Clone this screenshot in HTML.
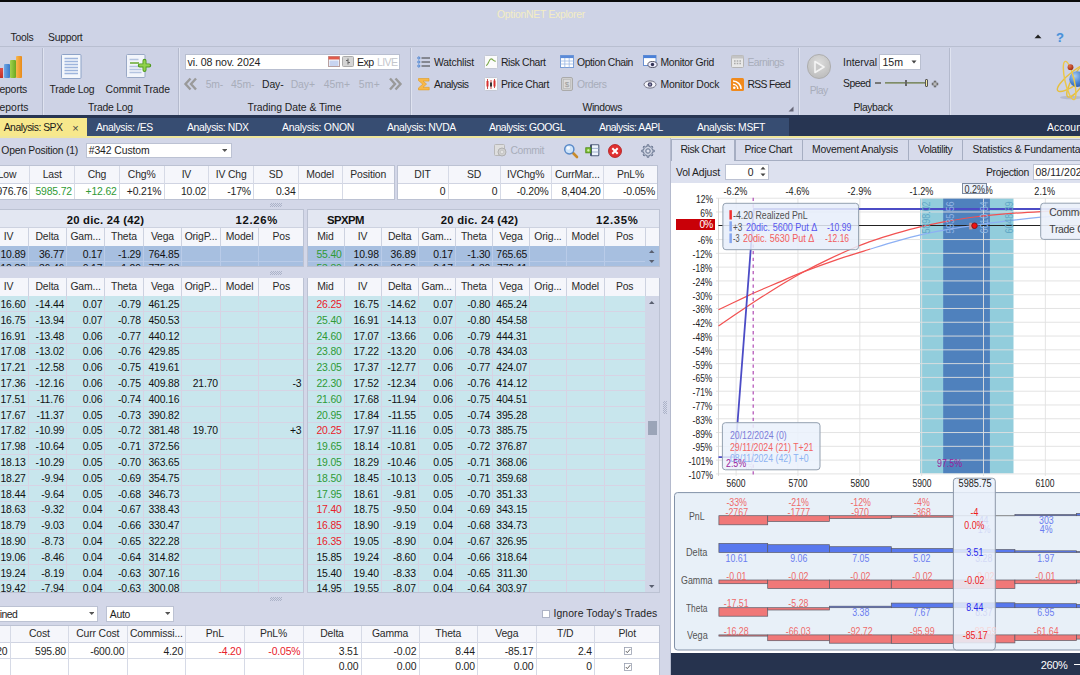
<!DOCTYPE html>
<html lang="es"><head><meta charset="utf-8"><title>OptionNET Explorer</title>
<style>
html,body{margin:0;padding:0}
body{width:1080px;height:675px;overflow:hidden;position:relative;background:#d3d7e8;font-family:"Liberation Sans",sans-serif;font-size:10.4px;letter-spacing:-0.15px;color:#1e1e1e}
.b{position:absolute;display:block;overflow:hidden}
.t{position:absolute;white-space:nowrap;line-height:14px;height:14px}
svg text{font-family:"Liberation Sans",sans-serif}
</style></head>
<body>
<div class="b" style="left:0px;top:0px;width:1080px;height:116px;background:#ced3e6;"></div>
<div class="b" style="left:0px;top:0px;width:1080px;height:1.5px;background:#0a0a0a;"></div>
<span class="t" style="left:497px;top:7.6px;letter-spacing:-0.27px;color:#f3edc4;">OptionNET Explorer</span>
<span class="t" style="left:10.5px;top:31.1px;letter-spacing:-0.26px;">Tools</span>
<span class="t" style="left:48px;top:31.1px;letter-spacing:-0.28px;">Support</span>
<svg class="b" style="left:1033px;top:32px" width="10" height="8" viewBox="0 0 10 8"><path d="M1.5 6.2 L5 2.4 L8.5 6.2Z" fill="#222"/></svg>
<span class="t" style="left:1056.1px;top:30.6px;font-size:13px;color:#4a90d8;font-weight:bold;text-shadow:0 0 1px #9cc8f0;">?</span>
<div class="b" style="left:0px;top:46px;width:1080px;height:1px;background:#b9bfd1;"></div>
<div class="b" style="left:0px;top:47px;width:1080px;height:68px;background:#cdd2e5;"></div>
<div class="b" style="left:42px;top:48px;width:1px;height:66.5px;background:#b4bacd;"></div>
<div class="b" style="left:43px;top:48px;width:1px;height:66.5px;background:#dfe3f0;"></div>
<div class="b" style="left:177.8px;top:48px;width:1px;height:66.5px;background:#b4bacd;"></div>
<div class="b" style="left:178.8px;top:48px;width:1px;height:66.5px;background:#dfe3f0;"></div>
<div class="b" style="left:410px;top:48px;width:1px;height:66.5px;background:#b4bacd;"></div>
<div class="b" style="left:411px;top:48px;width:1px;height:66.5px;background:#dfe3f0;"></div>
<div class="b" style="left:798.2px;top:48px;width:1px;height:66.5px;background:#b4bacd;"></div>
<div class="b" style="left:799.2px;top:48px;width:1px;height:66.5px;background:#dfe3f0;"></div>
<div class="b" style="left:948.8px;top:48px;width:1px;height:66.5px;background:#b4bacd;"></div>
<div class="b" style="left:949.8px;top:48px;width:1px;height:66.5px;background:#dfe3f0;"></div>
<div class="b" style="left:0px;top:67.5px;width:2.5px;height:10px;background:linear-gradient(#e0524a,#c03028);"></div>
<div class="b" style="left:3.5px;top:63.5px;width:6px;height:14px;background:linear-gradient(90deg,#6fa8e6,#3a78c8);border-radius:1px;"></div>
<div class="b" style="left:10px;top:60px;width:5.5px;height:17.5px;background:linear-gradient(90deg,#a4d24e,#6aa820);border-radius:1px;"></div>
<div class="b" style="left:16px;top:55.5px;width:6px;height:22px;background:linear-gradient(90deg,#f8b850,#e88a18);border-radius:1px;"></div>
<span class="t" style="left:-0.5px;top:83.1px;letter-spacing:-0.23px;">eports</span>
<span class="t" style="left:-0.5px;top:101.1px;letter-spacing:0.02px;">eports</span>
<svg class="b" style="left:60px;top:53px" width="23" height="27" viewBox="0 0 23 27"><rect x="1.5" y="1.5" width="19.5" height="24" rx="1" fill="#f4f7fc" stroke="#8ea3c8" stroke-width="1"/><g stroke="#9db4dc" stroke-width="1.5"><path d="M4.5 5.5h13.5M4.5 8.5h13.5M4.5 11.5h13.5M4.5 14.5h13.5M4.5 17.5h13.5M4.5 20.5h13.5"/></g></svg>
<span class="t" style="left:49.5px;top:83.1px;letter-spacing:-0.23px;">Trade Log</span>
<span class="t" style="left:88px;top:101.1px;letter-spacing:-0.23px;">Trade Log</span>
<svg class="b" style="left:125px;top:53px" width="27" height="27" viewBox="0 0 27 27"><rect x="1.5" y="1.5" width="18.5" height="23" rx="1" fill="#f2f5fb" stroke="#9aa9c6" stroke-width="1"/><g stroke="#b4c4e0" stroke-width="1.4"><path d="M4.5 6.5h9M4.5 13.5h12M4.5 16.5h12M4.5 19.5h12"/></g><path d="M5 10h9" stroke="#6fae3c" stroke-width="1.6"/><path d="M19.5 7.7v9.4M14.8 12.4h9.4" stroke="#4f9a1e" stroke-width="4" stroke-linecap="round"/><path d="M19.5 8v8.8M15.1 12.4h8.8" stroke="#92d24c" stroke-width="2.2" stroke-linecap="round"/></svg>
<span class="t" style="left:105.5px;top:83.1px;letter-spacing:-0.07px;">Commit Trade</span>
<div class="b" style="left:185px;top:54px;width:214.5px;height:15.5px;background:#fff;border:1px solid #b9bfd0;box-sizing:border-box;"></div>
<span class="t" style="left:187.5px;top:54.7px;font-size:10.6px;letter-spacing:-0.07px;">vi. 08 nov. 2024</span>
<svg class="b" style="left:328px;top:55.6px" width="12" height="11" viewBox="0 0 12 11"><rect x="0.5" y="0.5" width="11" height="10" fill="#fff" stroke="#b8a0a0" stroke-width="1"/><rect x="0.5" y="0.5" width="11" height="3" fill="#e05a4a"/><rect x="1.5" y="4.5" width="9" height="5.5" fill="#c8d4f0"/></svg>
<svg class="b" style="left:342px;top:56px" width="12" height="11" viewBox="0 0 12 11"><rect x="0.5" y="0.5" width="11" height="10" rx="1" fill="#d4d4d4" stroke="#aaa" stroke-width="1"/><path d="M6 2.5v6M4 4.5h2M6 6.5h2" stroke="#666" stroke-width="1" fill="none"/></svg>
<span class="t" style="left:357px;top:54.7px;font-size:10.6px;letter-spacing:-0.59px;">Exp</span>
<span class="t" style="left:377px;top:54.7px;font-size:10.6px;letter-spacing:-0.62px;color:#c3c6cc;">LIVE</span>
<svg class="b" style="left:183px;top:76px" width="16" height="16" viewBox="0 0 16 16"><path d="M7.5 2.5L2.5 8l5 5.5M13 2.5L8 8l5 5.5" fill="none" stroke="#9a9a9a" stroke-width="2.4"/></svg>
<svg class="b" style="left:387px;top:76px" width="16" height="16" viewBox="0 0 16 16"><path d="M3 2.5L8 8l-5 5.5M8.5 2.5l5 5.5-5 5.5" fill="none" stroke="#9a9a9a" stroke-width="2.4"/></svg>
<span class="t" style="left:205.7px;top:77.6px;letter-spacing:-0.14px;color:#a8adba;">5m-</span>
<span class="t" style="left:231px;top:77.6px;letter-spacing:-0.05px;color:#a8adba;">45m-</span>
<span class="t" style="left:262px;top:77.6px;letter-spacing:-0.11px;">Day-</span>
<span class="t" style="left:290.7px;top:77.6px;letter-spacing:-0.07px;color:#a8adba;">Day+</span>
<span class="t" style="left:323.7px;top:77.6px;letter-spacing:0px;color:#a8adba;">45m+</span>
<span class="t" style="left:358.7px;top:77.6px;letter-spacing:0.26px;color:#a8adba;">5m+</span>
<span class="t" style="left:247.5px;top:101.1px;letter-spacing:-0.05px;">Trading Date &amp; Time</span>
<svg class="b" style="left:417px;top:56px" width="14" height="12" viewBox="0 0 14 12"><g fill="none" stroke="#3a7ad0" stroke-width="0.9"><circle cx="1.8" cy="2" r="1.1"/><circle cx="1.8" cy="6" r="1.1"/><circle cx="1.8" cy="10" r="1.1"/></g><path d="M4.5 2h8.5M4.5 6h8.5M4.5 10h8.5" stroke="#3c3c3c" stroke-width="1"/></svg>
<span class="t" style="left:434px;top:55.6px;letter-spacing:-0.2px;">Watchlist</span>
<svg class="b" style="left:417px;top:77px" width="14" height="14" viewBox="0 0 14 14"><path d="M1.5 1.5h10.5v2.6h-6l3.6 3-3.6 3.2h6.2v2.6H1.5v-2l4.3-3.7L1.5 3.6z" fill="#f8b848" stroke="#e09a20" stroke-width="0.6"/></svg>
<span class="t" style="left:434px;top:78.1px;letter-spacing:-0.53px;">Analysis</span>
<svg class="b" style="left:484px;top:55px" width="14" height="14" viewBox="0 0 14 14"><rect x="0.5" y="0.5" width="13" height="13" rx="1" fill="#fbfbfb" stroke="#c4c8d4"/><path d="M2 10.5c2.4 0 2.8-6.6 5-6.6s2.2 2.4 4.8 2.4" fill="none" stroke="#7aa84a" stroke-width="1.1"/></svg>
<span class="t" style="left:501px;top:55.6px;letter-spacing:-0.4px;">Risk Chart</span>
<svg class="b" style="left:484px;top:77px" width="14" height="14" viewBox="0 0 14 14"><rect x="0.5" y="0.5" width="13" height="13" rx="1" fill="#fbfbfb" stroke="#c4c8d4"/><path d="M3.5 2v10M7 3v9M10.5 2v9" stroke="#c02020" stroke-width="0.8"/><rect x="2.5" y="4" width="2" height="5.5" fill="#d83030"/><rect x="6" y="5.5" width="2" height="4" fill="#333"/><rect x="9.5" y="3.5" width="2" height="6" fill="#d83030"/></svg>
<span class="t" style="left:501px;top:78.1px;letter-spacing:-0.37px;">Price Chart</span>
<svg class="b" style="left:560px;top:55px" width="14" height="13" viewBox="0 0 14 13"><rect x="0.5" y="0.5" width="13" height="12" fill="#fff" stroke="#7a9ed6"/><rect x="0.5" y="0.5" width="13" height="2.6" fill="#5b8ad8"/><path d="M0.5 6h13M0.5 9h13M4.8 3v9.5M9.2 3v9.5" stroke="#9ab8e4" stroke-width="0.8"/></svg>
<span class="t" style="left:577px;top:55.6px;letter-spacing:-0.39px;">Option Chain</span>
<svg class="b" style="left:561px;top:77px" width="12" height="14" viewBox="0 0 12 14"><rect x="0.5" y="0.5" width="11" height="13" rx="1.5" fill="#cfcfcf" stroke="#aaa"/><rect x="2.5" y="2.5" width="7" height="9" fill="#dcdcdc" stroke="#b4b4b4" stroke-width="0.6"/></svg>
<span class="t" style="left:564.85px;top:78.1px;font-size:8px;color:#999;">$</span>
<span class="t" style="left:577px;top:78.1px;letter-spacing:-0.38px;color:#a8adba;">Orders</span>
<svg class="b" style="left:643px;top:55px" width="15" height="14" viewBox="0 0 15 14"><rect x="0.5" y="0.5" width="12.5" height="10" fill="#fff" stroke="#6a90d0"/><rect x="0.5" y="0.5" width="12.5" height="2.6" fill="#4a80d8"/><ellipse cx="9.5" cy="9.5" rx="4.6" ry="3" fill="#eef" stroke="#445" stroke-width="0.9"/><circle cx="9.5" cy="9.5" r="1.7" fill="#335"/></svg>
<span class="t" style="left:660.5px;top:55.6px;letter-spacing:-0.31px;">Monitor Grid</span>
<svg class="b" style="left:643px;top:79px" width="15" height="11" viewBox="0 0 15 11"><ellipse cx="7" cy="5.5" rx="6" ry="3.6" fill="#f4f4fa" stroke="#667" stroke-width="0.9"/><circle cx="7" cy="5.5" r="2.3" fill="#446"/><circle cx="7" cy="5.5" r="0.9" fill="#aac"/></svg>
<span class="t" style="left:660.5px;top:78.1px;letter-spacing:-0.21px;">Monitor Dock</span>
<svg class="b" style="left:731px;top:55px" width="13" height="13" viewBox="0 0 13 13"><rect x="0.5" y="0.5" width="12" height="12" rx="1" fill="#e8e8e8" stroke="#b4b4b4"/><rect x="0.5" y="0.5" width="12" height="3" fill="#c4c4c4"/><path d="M3 6h1.6M5.7 6h1.6M8.4 6h1.6M3 8.5h1.6M5.7 8.5h1.6M8.4 8.5h1.6" stroke="#aaa" stroke-width="1.3"/></svg>
<span class="t" style="left:747.5px;top:55.6px;letter-spacing:-0.57px;color:#a8adba;">Earnings</span>
<svg class="b" style="left:731px;top:77.5px" width="13" height="13" viewBox="0 0 13 13"><rect x="0" y="0" width="13" height="13" rx="1.5" fill="#f08a1c"/><circle cx="3.3" cy="9.8" r="1.3" fill="#fff"/><path d="M2 6.3a4.8 4.8 0 0 1 4.8 4.8M2 3a8.1 8.1 0 0 1 8.1 8.1" fill="none" stroke="#fff" stroke-width="1.5"/></svg>
<span class="t" style="left:747.5px;top:78.1px;letter-spacing:-0.68px;">RSS Feed</span>
<span class="t" style="left:582.5px;top:101.1px;letter-spacing:-0.38px;">Windows</span>
<svg class="b" style="left:788px;top:106px" width="6" height="6" viewBox="0 0 6 6"><path d="M5.5 0.5v5h-5z" fill="#667"/></svg>
<div class="b" style="left:806.5px;top:54px;width:24.5px;height:24.5px;background:radial-gradient(circle at 50% 35%,#dcdcdc,#b6b6b6);border-radius:50%;border:1px solid #adadad;box-sizing:border-box;"></div>
<svg class="b" style="left:813px;top:59.5px" width="13" height="14" viewBox="0 0 13 14"><path d="M2 1.5L11 7 2 12.5z" fill="#c9c9c9" stroke="#f4f4f4" stroke-width="1.6" stroke-linejoin="round"/></svg>
<span class="t" style="left:809.7px;top:83.6px;letter-spacing:-0.56px;color:#a8adba;">Play</span>
<span class="t" style="left:843px;top:55.6px;letter-spacing:-0.01px;">Interval</span>
<div class="b" style="left:878.7px;top:53.7px;width:42.6px;height:16px;background:#fff;border:1px solid #b9bfd0;box-sizing:border-box;"></div>
<span class="t" style="left:882.5px;top:54.5px;font-size:10.6px;letter-spacing:-0.04px;">15m</span>
<svg class="b" style="left:911px;top:60px" width="6" height="4" viewBox="0 0 6 4"><path d="M0.5 0.5h5L3 3.5z" fill="#444"/></svg>
<span class="t" style="left:843px;top:77.1px;letter-spacing:-0.51px;">Speed</span>
<div class="b" style="left:874.5px;top:82.3px;width:6px;height:1.6px;background:#777;"></div>
<div class="b" style="left:884.5px;top:82px;width:43px;height:2px;background:linear-gradient(#6f7f5a,#a8b09a);"></div>
<div class="b" style="left:904.5px;top:80px;width:2px;height:6px;background:#e8e8e8;border:0.5px solid #666;box-sizing:border-box;"></div>
<div class="b" style="left:924.5px;top:79px;width:3px;height:7.5px;background:#f3e8a0;border:0.7px solid #555;box-sizing:border-box;border-radius:1px;"></div>
<svg class="b" style="left:931px;top:79.5px" width="8" height="8" viewBox="0 0 8 8"><path d="M4 0.8v6.4M0.8 4h6.4" stroke="#555" stroke-width="2.4"/><path d="M4 1.6v4.8M1.6 4h4.8" stroke="#e4e4e4" stroke-width="0.9"/></svg>
<span class="t" style="left:853.5px;top:101.1px;letter-spacing:-0.4px;">Playback</span>
<svg class="b" style="left:1052px;top:54px" width="28" height="50" viewBox="0 0 28 50"><defs><radialGradient id="gs" cx="35%" cy="30%" r="75%"><stop offset="0" stop-color="#a8cdf4"/><stop offset="0.6" stop-color="#4a84d0"/><stop offset="1" stop-color="#2a5cae"/></radialGradient><radialGradient id="gr" cx="35%" cy="30%" r="75%"><stop offset="0" stop-color="#e0704a"/><stop offset="1" stop-color="#a02c10"/></radialGradient></defs><ellipse cx="19" cy="43.5" rx="11" ry="1.8" fill="#8a90a8" opacity="0.35"/><g fill="none" stroke="#e6c040" stroke-width="1.45"><ellipse cx="27" cy="25" rx="6" ry="21" transform="rotate(32 27 25)"/><ellipse cx="24.5" cy="22.5" rx="23.5" ry="6.3" transform="rotate(-37 24.5 22.5)"/></g><circle cx="25.2" cy="25.2" r="7.9" fill="url(#gs)"/><ellipse cx="17.6" cy="26.5" rx="4.6" ry="19.6" transform="rotate(-13 17.6 26.5)" fill="none" stroke="#ecc848" stroke-width="1.45"/><path d="M20.5 18.5a8 8 0 0 1 9 -1" fill="none" stroke="#4a84d0" stroke-width="0"/><circle cx="18.5" cy="13.2" r="2.9" fill="url(#gr)"/></svg>
<div class="b" style="left:0px;top:115.3px;width:1080px;height:21px;background:#273552;"></div>
<div class="b" style="left:0px;top:117.7px;width:789px;height:18.4px;background:#374d72;"></div>
<div class="b" style="left:0px;top:118px;width:87px;height:18.2px;background:#f7e88c;"></div>
<span class="t" style="left:3.7px;top:120.9px;letter-spacing:-0.5px;color:#1a1a1a;">Analysis: SPX</span>
<span class="t" style="left:72.16px;top:120.6px;font-size:11px;color:#444;">×</span>
<span class="t" style="left:96px;top:120.9px;letter-spacing:-0.33px;color:#fff;">Analysis: /ES</span>
<span class="t" style="left:187px;top:120.9px;letter-spacing:-0.37px;color:#fff;">Analysis: NDX</span>
<span class="t" style="left:282px;top:120.9px;letter-spacing:-0.26px;color:#fff;">Analysis: ONON</span>
<span class="t" style="left:387px;top:120.9px;letter-spacing:-0.31px;color:#fff;">Analysis: NVDA</span>
<span class="t" style="left:489px;top:120.9px;letter-spacing:-0.44px;color:#fff;">Analysis: GOOGL</span>
<span class="t" style="left:599px;top:120.9px;letter-spacing:-0.47px;color:#fff;">Analysis: AAPL</span>
<span class="t" style="left:697px;top:120.9px;letter-spacing:-0.34px;color:#fff;">Analysis: MSFT</span>
<span class="t" style="left:1047px;top:120.9px;letter-spacing:0.06px;color:#fff;">Account</span>
<div class="b" style="left:0px;top:136px;width:1080px;height:1.5px;background:#f0e69a;"></div>
<div class="b" style="left:0px;top:138px;width:670px;height:537px;background:#d3d7e8;"></div>
<span class="t" style="left:1.3px;top:144.1px;letter-spacing:-0.25px;">Open Position (1)</span>
<div class="b" style="left:86px;top:143px;width:145.5px;height:15px;background:#fff;border:1px solid #bcc2d3;box-sizing:border-box;"></div>
<span class="t" style="left:88.7px;top:144.3px;letter-spacing:-0.08px;">#342 Custom</span>
<svg class="b" style="left:221.5px;top:149px" width="5.5" height="3" viewBox="0 0 5.5 3"><path d="M0 0H5.5L2.75 3z" fill="#555"/></svg>
<svg class="b" style="left:494px;top:144px" width="13" height="13" viewBox="0 0 13 13"><rect x="0.5" y="0.5" width="10" height="11" rx="1" fill="#dedede" stroke="#b8b8b8"/><circle cx="8" cy="8" r="4" fill="#d0d0d0" stroke="#b0b0b0"/><circle cx="8" cy="8" r="1.8" fill="#e4e4e4" stroke="#b8b8b8" stroke-width="0.6"/></svg>
<span class="t" style="left:510.4px;top:144.3px;letter-spacing:-0.37px;color:#a8adba;">Commit</span>
<svg class="b" style="left:563px;top:143px" width="16" height="16" viewBox="0 0 16 16"><path d="M9.5 9.5L14 14" stroke="#c88a2a" stroke-width="2.6" stroke-linecap="round"/><circle cx="6.3" cy="6.3" r="4.6" fill="#cfe4fa" stroke="#5a8ac8" stroke-width="1.5"/><circle cx="5.3" cy="5" r="1.8" fill="#fff" opacity="0.8"/></svg>
<svg class="b" style="left:585px;top:143.8px" width="15" height="13" viewBox="0 0 15 13"><rect x="5.6" y="0.8" width="8.2" height="11" rx="0.8" fill="#eef4fd" stroke="#51607e" stroke-width="1.1"/><path d="M5.6 4.4h8.2M5.6 8h8.2" stroke="#8fa2c4" stroke-width="0.8"/><path d="M6.2 0.8v11" stroke="#3c4a68" stroke-width="1.4"/><rect x="0.8" y="3.8" width="5" height="5" fill="#84c43a" stroke="#4c8a14" stroke-width="0.9"/><path d="M3.3 5v2.6M2 6.3h2.6" stroke="#e8f8d0" stroke-width="0.7"/></svg>
<svg class="b" style="left:607.5px;top:143.5px" width="14" height="14" viewBox="0 0 14 14"><circle cx="7" cy="7" r="6.5" fill="#e03030" stroke="#b01818" stroke-width="0.8"/><path d="M4.3 4.3l5.4 5.4M9.7 4.3l-5.4 5.4" stroke="#fff" stroke-width="2"/></svg>
<svg class="b" style="left:640.8px;top:143.6px" width="14" height="14" viewBox="0 0 14 14"><path d="M11.80 6.00L13.35 6.24L13.35 7.76L11.80 8.00L11.10 9.69L12.03 10.96L10.96 12.03L9.69 11.10L8.00 11.80L7.76 13.35L6.24 13.35L6.00 11.80L4.31 11.10L3.04 12.03L1.97 10.96L2.90 9.69L2.20 8.00L0.65 7.76L0.65 6.24L2.20 6.00L2.90 4.31L1.97 3.04L3.04 1.97L4.31 2.90L6.00 2.20L6.24 0.65L7.76 0.65L8.00 2.20L9.69 2.90L10.96 1.97L12.03 3.04L11.10 4.31Z" fill="#a4adc2" stroke="#6c7892" stroke-width="0.9" stroke-linejoin="round"/><circle cx="7" cy="7" r="3.5" fill="none" stroke="#dfe3ee" stroke-width="0.9"/><circle cx="7" cy="7" r="2.1" fill="#dde1ee" stroke="#6c7892" stroke-width="0.9"/></svg>
<div class="b" style="left:-2px;top:165px;width:396.5px;height:34.5px;background:#fff;border:1px solid #bcc2d3;box-sizing:border-box;"></div>
<div class="b" style="left:-1px;top:166px;width:394.5px;height:17.2px;background:#f5f6fb;"></div>
<div class="b" style="left:-1px;top:182.7px;width:394.5px;height:1px;background:#d0d4e2;"></div>
<div class="b" style="left:29.4px;top:166px;width:1px;height:32.5px;background:#d6dae6;"></div>
<div class="b" style="left:74.1px;top:166px;width:1px;height:32.5px;background:#d6dae6;"></div>
<div class="b" style="left:118.8px;top:166px;width:1px;height:32.5px;background:#d6dae6;"></div>
<div class="b" style="left:163.5px;top:166px;width:1px;height:32.5px;background:#d6dae6;"></div>
<div class="b" style="left:208.3px;top:166px;width:1px;height:32.5px;background:#d6dae6;"></div>
<div class="b" style="left:253px;top:166px;width:1px;height:32.5px;background:#d6dae6;"></div>
<div class="b" style="left:297.7px;top:166px;width:1px;height:32.5px;background:#d6dae6;"></div>
<div class="b" style="left:341.5px;top:166px;width:1px;height:32.5px;background:#d6dae6;"></div>
<span class="t" style="left:42.72px;top:167.6px;color:#2a2a2a;">Last</span>
<span class="t" style="left:87.64px;top:167.6px;color:#2a2a2a;">Chg</span>
<span class="t" style="left:127.79px;top:167.6px;color:#2a2a2a;">Chg%</span>
<span class="t" style="left:181.64px;top:167.6px;color:#2a2a2a;">IV</span>
<span class="t" style="left:215.7px;top:167.6px;color:#2a2a2a;">IV Chg</span>
<span class="t" style="left:268.78px;top:167.6px;color:#2a2a2a;">SD</span>
<span class="t" style="left:306.31px;top:167.6px;color:#2a2a2a;">Model</span>
<span class="t" style="left:350.35px;top:167.6px;color:#2a2a2a;">Position</span>
<span class="t" style="left:-2.33px;top:167.6px;color:#2a2a2a;">Low</span>
<span class="t" style="left:-3.61px;top:185.4px;">976.76</span>
<span class="t" style="left:35.46px;top:185.4px;color:#2f9a36;">5985.72</span>
<span class="t" style="left:85.5px;top:185.4px;color:#2f9a36;">+12.62</span>
<span class="t" style="left:126.74px;top:185.4px;">+0.21%</span>
<span class="t" style="left:180.92px;top:185.4px;">10.02</span>
<span class="t" style="left:227.22px;top:185.4px;">-17%</span>
<span class="t" style="left:275.96px;top:185.4px;">0.34</span>
<div class="b" style="left:397px;top:165px;width:260.7px;height:34.5px;background:#fff;border:1px solid #bcc2d3;box-sizing:border-box;"></div>
<div class="b" style="left:398px;top:166px;width:258.7px;height:17.2px;background:#f5f6fb;"></div>
<div class="b" style="left:398px;top:182.7px;width:258.7px;height:1px;background:#d0d4e2;"></div>
<div class="b" style="left:447.5px;top:166px;width:1px;height:32.5px;background:#d6dae6;"></div>
<div class="b" style="left:499.5px;top:166px;width:1px;height:32.5px;background:#d6dae6;"></div>
<div class="b" style="left:550.8px;top:166px;width:1px;height:32.5px;background:#d6dae6;"></div>
<div class="b" style="left:602.8px;top:166px;width:1px;height:32.5px;background:#d6dae6;"></div>
<span class="t" style="left:414.35px;top:167.6px;color:#2a2a2a;">DIT</span>
<span class="t" style="left:466.93px;top:167.6px;color:#2a2a2a;">SD</span>
<span class="t" style="left:507.02px;top:167.6px;color:#2a2a2a;">IVChg%</span>
<span class="t" style="left:554.94px;top:167.6px;color:#2a2a2a;">CurrMar...</span>
<span class="t" style="left:616.92px;top:167.6px;color:#2a2a2a;">PnL%</span>
<span class="t" style="left:439.77px;top:185.4px;">0</span>
<span class="t" style="left:491.77px;top:185.4px;">0</span>
<span class="t" style="left:516.65px;top:185.4px;">-0.20%</span>
<span class="t" style="left:561.42px;top:185.4px;">8,404.20</span>
<span class="t" style="left:623.05px;top:185.4px;">-0.05%</span>
<div class="b" style="left:269.5px;top:203px;width:12.5px;height:4px;opacity:.55;background-image:linear-gradient(45deg,#8e97ae 25%,transparent 25%,transparent 75%,#8e97ae 75%),linear-gradient(45deg,#8e97ae 25%,transparent 25%,transparent 75%,#8e97ae 75%);background-size:2px 2px;background-position:0 0,1px 1px;"></div>
<div class="b" style="left:-2px;top:209.1px;width:306.3px;height:58.1px;background:#e3e7f2;border:1px solid #bcc2d3;box-sizing:border-box;"></div>
<div class="b" style="left:306.5px;top:209.1px;width:353.5px;height:58.1px;background:#e3e7f2;border:1px solid #bcc2d3;box-sizing:border-box;"></div>
<span class="t" style="left:66.7px;top:212.5px;font-size:11.3px;letter-spacing:0.23px;color:#111;font-weight:bold;">20 dic. 24 (42)</span>
<span class="t" style="left:235.5px;top:212.5px;font-size:11.3px;letter-spacing:0.7px;color:#111;font-weight:bold;">12.26%</span>
<span class="t" style="left:327px;top:212.5px;font-size:11.3px;letter-spacing:-0.51px;color:#111;font-weight:bold;">SPXPM</span>
<span class="t" style="left:440.8px;top:212.5px;font-size:11.3px;letter-spacing:0.23px;color:#111;font-weight:bold;">20 dic. 24 (42)</span>
<span class="t" style="left:596px;top:212.5px;font-size:11.3px;letter-spacing:0.71px;color:#111;font-weight:bold;">12.35%</span>
<div class="b" style="left:-1px;top:227.3px;width:304.3px;height:1px;background:#cdd2e0;"></div>
<div class="b" style="left:307.5px;top:227.3px;width:351.5px;height:1px;background:#cdd2e0;"></div>
<div class="b" style="left:-1px;top:227.8px;width:304.3px;height:18.1px;background:#f5f6fb;"></div>
<div class="b" style="left:307.5px;top:227.8px;width:351.5px;height:18.1px;background:#f5f6fb;"></div>
<span class="t" style="left:3.74px;top:229.85px;color:#2a2a2a;">IV</span>
<div class="b" style="left:27.5px;top:227.8px;width:1px;height:18.1px;background:#cdd2e0;"></div>
<span class="t" style="left:35.49px;top:229.85px;color:#2a2a2a;">Delta</span>
<div class="b" style="left:66px;top:227.8px;width:1px;height:18.1px;background:#cdd2e0;"></div>
<span class="t" style="left:70.45px;top:229.85px;color:#2a2a2a;">Gam...</span>
<div class="b" style="left:104.2px;top:227.8px;width:1px;height:18.1px;background:#cdd2e0;"></div>
<span class="t" style="left:111.03px;top:229.85px;color:#2a2a2a;">Theta</span>
<div class="b" style="left:142.7px;top:227.8px;width:1px;height:18.1px;background:#cdd2e0;"></div>
<span class="t" style="left:150.89px;top:229.85px;color:#2a2a2a;">Vega</span>
<div class="b" style="left:181.2px;top:227.8px;width:1px;height:18.1px;background:#cdd2e0;"></div>
<span class="t" style="left:184.64px;top:229.85px;color:#2a2a2a;">OrigP...</span>
<div class="b" style="left:219.8px;top:227.8px;width:1px;height:18.1px;background:#cdd2e0;"></div>
<span class="t" style="left:225.76px;top:229.85px;color:#2a2a2a;">Model</span>
<div class="b" style="left:258.3px;top:227.8px;width:1px;height:18.1px;background:#cdd2e0;"></div>
<span class="t" style="left:272.56px;top:229.85px;color:#2a2a2a;">Pos</span>
<span class="t" style="left:317.35px;top:229.85px;color:#2a2a2a;">Mid</span>
<div class="b" style="left:343.5px;top:227.8px;width:1px;height:18.1px;background:#cdd2e0;"></div>
<span class="t" style="left:357.84px;top:229.85px;color:#2a2a2a;">IV</span>
<div class="b" style="left:380.7px;top:227.8px;width:1px;height:18.1px;background:#cdd2e0;"></div>
<span class="t" style="left:387.94px;top:229.85px;color:#2a2a2a;">Delta</span>
<div class="b" style="left:417.7px;top:227.8px;width:1px;height:18.1px;background:#cdd2e0;"></div>
<span class="t" style="left:421.55px;top:229.85px;color:#2a2a2a;">Gam...</span>
<div class="b" style="left:454.7px;top:227.8px;width:1px;height:18.1px;background:#cdd2e0;"></div>
<span class="t" style="left:460.93px;top:229.85px;color:#2a2a2a;">Theta</span>
<div class="b" style="left:492px;top:227.8px;width:1px;height:18.1px;background:#cdd2e0;"></div>
<span class="t" style="left:499.44px;top:229.85px;color:#2a2a2a;">Vega</span>
<div class="b" style="left:529px;top:227.8px;width:1px;height:18.1px;background:#cdd2e0;"></div>
<span class="t" style="left:534.37px;top:229.85px;color:#2a2a2a;">Orig...</span>
<div class="b" style="left:566px;top:227.8px;width:1px;height:18.1px;background:#cdd2e0;"></div>
<span class="t" style="left:571.46px;top:229.85px;color:#2a2a2a;">Model</span>
<div class="b" style="left:603.5px;top:227.8px;width:1px;height:18.1px;background:#cdd2e0;"></div>
<span class="t" style="left:615.91px;top:229.85px;color:#2a2a2a;">Pos</span>
<div class="b" style="left:644.8px;top:227.8px;width:1px;height:18.1px;background:#cdd2e0;"></div>
<div class="b" style="left:-1px;top:245.9px;width:304.3px;height:20.3px;background:#a7bfe0;"><div class="b" style="left:0px;top:15.3px;width:306px;height:1px;background:#b9cbe8;"></div><span class="t" style="left:1.42px;top:1.9px;color:#111;">10.89</span><span class="t" style="left:39.92px;top:1.9px;color:#111;">36.77</span><span class="t" style="left:83.76px;top:1.9px;color:#111;">0.17</span><span class="t" style="left:118.94px;top:1.9px;color:#111;">-1.29</span><span class="t" style="left:149.49px;top:1.9px;color:#111;">764.85</span><div class="b" style="left:0px;top:31.1px;width:306px;height:1px;background:#b9cbe8;"></div><span class="t" style="left:1.42px;top:16.5px;color:#111;">10.88</span><span class="t" style="left:39.92px;top:16.5px;color:#111;">36.46</span><span class="t" style="left:83.76px;top:16.5px;color:#111;">0.17</span><span class="t" style="left:118.94px;top:16.5px;color:#111;">-1.29</span><span class="t" style="left:149.49px;top:16.5px;color:#111;">775.03</span><div class="b" style="left:28.5px;top:0px;width:1px;height:20.3px;background:#b9cbe8;"></div><div class="b" style="left:67px;top:0px;width:1px;height:20.3px;background:#b9cbe8;"></div><div class="b" style="left:105.2px;top:0px;width:1px;height:20.3px;background:#b9cbe8;"></div><div class="b" style="left:143.7px;top:0px;width:1px;height:20.3px;background:#b9cbe8;"></div><div class="b" style="left:182.2px;top:0px;width:1px;height:20.3px;background:#b9cbe8;"></div><div class="b" style="left:220.8px;top:0px;width:1px;height:20.3px;background:#b9cbe8;"></div><div class="b" style="left:259.3px;top:0px;width:1px;height:20.3px;background:#b9cbe8;"></div></div>
<div class="b" style="left:307.5px;top:245.9px;width:337.8px;height:20.3px;background:#a7bfe0;"><div class="b" style="left:0px;top:15.3px;width:340px;height:1px;background:#b9cbe8;"></div><span class="t" style="left:8.92px;top:1.9px;color:#2f9a36;">55.40</span><span class="t" style="left:46.12px;top:1.9px;color:#111;">10.98</span><span class="t" style="left:83.12px;top:1.9px;color:#111;">36.89</span><span class="t" style="left:125.76px;top:1.9px;color:#111;">0.17</span><span class="t" style="left:159.74px;top:1.9px;color:#111;">-1.30</span><span class="t" style="left:188.79px;top:1.9px;color:#111;">765.65</span><div class="b" style="left:0px;top:31.1px;width:340px;height:1px;background:#b9cbe8;"></div><span class="t" style="left:8.92px;top:16.5px;color:#2f9a36;">53.80</span><span class="t" style="left:46.12px;top:16.5px;color:#111;">10.96</span><span class="t" style="left:83.12px;top:16.5px;color:#111;">36.59</span><span class="t" style="left:125.76px;top:16.5px;color:#111;">0.17</span><span class="t" style="left:159.74px;top:16.5px;color:#111;">-1.30</span><span class="t" style="left:189.56px;top:16.5px;color:#111;">776.11</span><div class="b" style="left:36px;top:0px;width:1px;height:20.3px;background:#b9cbe8;"></div><div class="b" style="left:73.2px;top:0px;width:1px;height:20.3px;background:#b9cbe8;"></div><div class="b" style="left:110.2px;top:0px;width:1px;height:20.3px;background:#b9cbe8;"></div><div class="b" style="left:147.2px;top:0px;width:1px;height:20.3px;background:#b9cbe8;"></div><div class="b" style="left:184.5px;top:0px;width:1px;height:20.3px;background:#b9cbe8;"></div><div class="b" style="left:221.5px;top:0px;width:1px;height:20.3px;background:#b9cbe8;"></div><div class="b" style="left:258.5px;top:0px;width:1px;height:20.3px;background:#b9cbe8;"></div><div class="b" style="left:296px;top:0px;width:1px;height:20.3px;background:#b9cbe8;"></div></div>
<div class="b" style="left:645.3px;top:245.9px;width:13.7px;height:20.3px;background:#a7bfe0;"></div>
<svg class="b" style="left:649.3px;top:250.4px" width="5.5" height="3" viewBox="0 0 5.5 3"><path d="M0 3H5.5L2.75 0z" fill="#5a6070"/></svg>
<svg class="b" style="left:649.3px;top:259.9px" width="5.5" height="3" viewBox="0 0 5.5 3"><path d="M0 0H5.5L2.75 3z" fill="#5a6070"/></svg>
<div class="b" style="left:269.5px;top:271.3px;width:12.5px;height:4px;opacity:.55;background-image:linear-gradient(45deg,#8e97ae 25%,transparent 25%,transparent 75%,#8e97ae 75%),linear-gradient(45deg,#8e97ae 25%,transparent 25%,transparent 75%,#8e97ae 75%);background-size:2px 2px;background-position:0 0,1px 1px;"></div>
<div class="b" style="left:-2px;top:278.2px;width:306.3px;height:314.8px;background:#e3e7f2;border:1px solid #bcc2d3;box-sizing:border-box;"></div>
<div class="b" style="left:306.5px;top:278.2px;width:353.5px;height:314.8px;background:#e3e7f2;border:1px solid #bcc2d3;box-sizing:border-box;"></div>
<div class="b" style="left:-1px;top:278.2px;width:304.3px;height:17.9px;background:#f5f6fb;"></div>
<div class="b" style="left:307.5px;top:278.2px;width:351.5px;height:17.9px;background:#f5f6fb;"></div>
<span class="t" style="left:3.74px;top:280.15px;color:#2a2a2a;">IV</span>
<div class="b" style="left:27.5px;top:278.2px;width:1px;height:17.9px;background:#cdd2e0;"></div>
<span class="t" style="left:35.49px;top:280.15px;color:#2a2a2a;">Delta</span>
<div class="b" style="left:66px;top:278.2px;width:1px;height:17.9px;background:#cdd2e0;"></div>
<span class="t" style="left:70.45px;top:280.15px;color:#2a2a2a;">Gam...</span>
<div class="b" style="left:104.2px;top:278.2px;width:1px;height:17.9px;background:#cdd2e0;"></div>
<span class="t" style="left:111.03px;top:280.15px;color:#2a2a2a;">Theta</span>
<div class="b" style="left:142.7px;top:278.2px;width:1px;height:17.9px;background:#cdd2e0;"></div>
<span class="t" style="left:150.89px;top:280.15px;color:#2a2a2a;">Vega</span>
<div class="b" style="left:181.2px;top:278.2px;width:1px;height:17.9px;background:#cdd2e0;"></div>
<span class="t" style="left:184.64px;top:280.15px;color:#2a2a2a;">OrigP...</span>
<div class="b" style="left:219.8px;top:278.2px;width:1px;height:17.9px;background:#cdd2e0;"></div>
<span class="t" style="left:225.76px;top:280.15px;color:#2a2a2a;">Model</span>
<div class="b" style="left:258.3px;top:278.2px;width:1px;height:17.9px;background:#cdd2e0;"></div>
<span class="t" style="left:272.56px;top:280.15px;color:#2a2a2a;">Pos</span>
<span class="t" style="left:317.35px;top:280.15px;color:#2a2a2a;">Mid</span>
<div class="b" style="left:343.5px;top:278.2px;width:1px;height:17.9px;background:#cdd2e0;"></div>
<span class="t" style="left:357.84px;top:280.15px;color:#2a2a2a;">IV</span>
<div class="b" style="left:380.7px;top:278.2px;width:1px;height:17.9px;background:#cdd2e0;"></div>
<span class="t" style="left:387.94px;top:280.15px;color:#2a2a2a;">Delta</span>
<div class="b" style="left:417.7px;top:278.2px;width:1px;height:17.9px;background:#cdd2e0;"></div>
<span class="t" style="left:421.55px;top:280.15px;color:#2a2a2a;">Gam...</span>
<div class="b" style="left:454.7px;top:278.2px;width:1px;height:17.9px;background:#cdd2e0;"></div>
<span class="t" style="left:460.93px;top:280.15px;color:#2a2a2a;">Theta</span>
<div class="b" style="left:492px;top:278.2px;width:1px;height:17.9px;background:#cdd2e0;"></div>
<span class="t" style="left:499.44px;top:280.15px;color:#2a2a2a;">Vega</span>
<div class="b" style="left:529px;top:278.2px;width:1px;height:17.9px;background:#cdd2e0;"></div>
<span class="t" style="left:534.37px;top:280.15px;color:#2a2a2a;">Orig...</span>
<div class="b" style="left:566px;top:278.2px;width:1px;height:17.9px;background:#cdd2e0;"></div>
<span class="t" style="left:571.46px;top:280.15px;color:#2a2a2a;">Model</span>
<div class="b" style="left:603.5px;top:278.2px;width:1px;height:17.9px;background:#cdd2e0;"></div>
<span class="t" style="left:615.91px;top:280.15px;color:#2a2a2a;">Pos</span>
<div class="b" style="left:644.8px;top:278.2px;width:1px;height:17.9px;background:#cdd2e0;"></div>
<div class="b" style="left:-1px;top:296.1px;width:304.3px;height:295.9px;background:#c8e6ed;"><div class="b" style="left:0px;top:15.3px;width:306px;height:1px;background:#d7d3e4;"></div><span class="t" style="left:1.42px;top:1.9px;color:#111;">16.60</span><span class="t" style="left:36.61px;top:1.9px;color:#111;">-14.44</span><span class="t" style="left:83.76px;top:1.9px;color:#111;">0.07</span><span class="t" style="left:118.94px;top:1.9px;color:#111;">-0.79</span><span class="t" style="left:149.49px;top:1.9px;color:#111;">461.25</span><div class="b" style="left:0px;top:31.1px;width:306px;height:1px;background:#d7d3e4;"></div><span class="t" style="left:1.42px;top:17.7px;color:#111;">16.75</span><span class="t" style="left:36.61px;top:17.7px;color:#111;">-13.94</span><span class="t" style="left:83.76px;top:17.7px;color:#111;">0.07</span><span class="t" style="left:118.94px;top:17.7px;color:#111;">-0.78</span><span class="t" style="left:149.49px;top:17.7px;color:#111;">450.53</span><div class="b" style="left:0px;top:46.9px;width:306px;height:1px;background:#d7d3e4;"></div><span class="t" style="left:1.42px;top:33.5px;color:#111;">16.91</span><span class="t" style="left:36.61px;top:33.5px;color:#111;">-13.48</span><span class="t" style="left:83.76px;top:33.5px;color:#111;">0.06</span><span class="t" style="left:118.94px;top:33.5px;color:#111;">-0.77</span><span class="t" style="left:149.49px;top:33.5px;color:#111;">440.12</span><div class="b" style="left:0px;top:62.7px;width:306px;height:1px;background:#d7d3e4;"></div><span class="t" style="left:1.42px;top:49.3px;color:#111;">17.08</span><span class="t" style="left:36.61px;top:49.3px;color:#111;">-13.02</span><span class="t" style="left:83.76px;top:49.3px;color:#111;">0.06</span><span class="t" style="left:118.94px;top:49.3px;color:#111;">-0.76</span><span class="t" style="left:149.49px;top:49.3px;color:#111;">429.85</span><div class="b" style="left:0px;top:78.5px;width:306px;height:1px;background:#d7d3e4;"></div><span class="t" style="left:1.42px;top:65.1px;color:#111;">17.21</span><span class="t" style="left:36.61px;top:65.1px;color:#111;">-12.58</span><span class="t" style="left:83.76px;top:65.1px;color:#111;">0.06</span><span class="t" style="left:118.94px;top:65.1px;color:#111;">-0.75</span><span class="t" style="left:149.49px;top:65.1px;color:#111;">419.61</span><div class="b" style="left:0px;top:94.3px;width:306px;height:1px;background:#d7d3e4;"></div><span class="t" style="left:1.42px;top:80.9px;color:#111;">17.36</span><span class="t" style="left:36.61px;top:80.9px;color:#111;">-12.16</span><span class="t" style="left:83.76px;top:80.9px;color:#111;">0.06</span><span class="t" style="left:118.94px;top:80.9px;color:#111;">-0.75</span><span class="t" style="left:149.49px;top:80.9px;color:#111;">409.88</span><span class="t" style="left:193.72px;top:80.9px;color:#111;">21.70</span><span class="t" style="left:293.55px;top:80.9px;color:#111;">-3</span><div class="b" style="left:0px;top:110.1px;width:306px;height:1px;background:#d7d3e4;"></div><span class="t" style="left:1.42px;top:96.7px;color:#111;">17.51</span><span class="t" style="left:37.38px;top:96.7px;color:#111;">-11.76</span><span class="t" style="left:83.76px;top:96.7px;color:#111;">0.06</span><span class="t" style="left:118.94px;top:96.7px;color:#111;">-0.74</span><span class="t" style="left:149.49px;top:96.7px;color:#111;">400.16</span><div class="b" style="left:0px;top:125.9px;width:306px;height:1px;background:#d7d3e4;"></div><span class="t" style="left:1.42px;top:112.5px;color:#111;">17.67</span><span class="t" style="left:37.38px;top:112.5px;color:#111;">-11.37</span><span class="t" style="left:83.76px;top:112.5px;color:#111;">0.05</span><span class="t" style="left:118.94px;top:112.5px;color:#111;">-0.73</span><span class="t" style="left:149.49px;top:112.5px;color:#111;">390.82</span><div class="b" style="left:0px;top:141.7px;width:306px;height:1px;background:#d7d3e4;"></div><span class="t" style="left:1.42px;top:128.3px;color:#111;">17.82</span><span class="t" style="left:36.61px;top:128.3px;color:#111;">-10.99</span><span class="t" style="left:83.76px;top:128.3px;color:#111;">0.05</span><span class="t" style="left:118.94px;top:128.3px;color:#111;">-0.72</span><span class="t" style="left:149.49px;top:128.3px;color:#111;">381.48</span><span class="t" style="left:193.72px;top:128.3px;color:#111;">19.70</span><span class="t" style="left:290.94px;top:128.3px;color:#111;">+3</span><div class="b" style="left:0px;top:157.5px;width:306px;height:1px;background:#d7d3e4;"></div><span class="t" style="left:1.42px;top:144.1px;color:#111;">17.98</span><span class="t" style="left:36.61px;top:144.1px;color:#111;">-10.64</span><span class="t" style="left:83.76px;top:144.1px;color:#111;">0.05</span><span class="t" style="left:118.94px;top:144.1px;color:#111;">-0.71</span><span class="t" style="left:149.49px;top:144.1px;color:#111;">372.56</span><div class="b" style="left:0px;top:173.3px;width:306px;height:1px;background:#d7d3e4;"></div><span class="t" style="left:1.42px;top:159.9px;color:#111;">18.13</span><span class="t" style="left:36.61px;top:159.9px;color:#111;">-10.29</span><span class="t" style="left:83.76px;top:159.9px;color:#111;">0.05</span><span class="t" style="left:118.94px;top:159.9px;color:#111;">-0.70</span><span class="t" style="left:149.49px;top:159.9px;color:#111;">363.65</span><div class="b" style="left:0px;top:189.1px;width:306px;height:1px;background:#d7d3e4;"></div><span class="t" style="left:1.42px;top:175.7px;color:#111;">18.27</span><span class="t" style="left:42.24px;top:175.7px;color:#111;">-9.94</span><span class="t" style="left:83.76px;top:175.7px;color:#111;">0.05</span><span class="t" style="left:118.94px;top:175.7px;color:#111;">-0.69</span><span class="t" style="left:149.49px;top:175.7px;color:#111;">354.75</span><div class="b" style="left:0px;top:204.9px;width:306px;height:1px;background:#d7d3e4;"></div><span class="t" style="left:1.42px;top:191.5px;color:#111;">18.44</span><span class="t" style="left:42.24px;top:191.5px;color:#111;">-9.64</span><span class="t" style="left:83.76px;top:191.5px;color:#111;">0.05</span><span class="t" style="left:118.94px;top:191.5px;color:#111;">-0.68</span><span class="t" style="left:149.49px;top:191.5px;color:#111;">346.73</span><div class="b" style="left:0px;top:220.7px;width:306px;height:1px;background:#d7d3e4;"></div><span class="t" style="left:1.42px;top:207.3px;color:#111;">18.63</span><span class="t" style="left:42.24px;top:207.3px;color:#111;">-9.32</span><span class="t" style="left:83.76px;top:207.3px;color:#111;">0.04</span><span class="t" style="left:118.94px;top:207.3px;color:#111;">-0.67</span><span class="t" style="left:149.49px;top:207.3px;color:#111;">338.43</span><div class="b" style="left:0px;top:236.5px;width:306px;height:1px;background:#d7d3e4;"></div><span class="t" style="left:1.42px;top:223.1px;color:#111;">18.79</span><span class="t" style="left:42.24px;top:223.1px;color:#111;">-9.03</span><span class="t" style="left:83.76px;top:223.1px;color:#111;">0.04</span><span class="t" style="left:118.94px;top:223.1px;color:#111;">-0.66</span><span class="t" style="left:149.49px;top:223.1px;color:#111;">330.47</span><div class="b" style="left:0px;top:252.3px;width:306px;height:1px;background:#d7d3e4;"></div><span class="t" style="left:1.42px;top:238.9px;color:#111;">18.90</span><span class="t" style="left:42.24px;top:238.9px;color:#111;">-8.73</span><span class="t" style="left:83.76px;top:238.9px;color:#111;">0.04</span><span class="t" style="left:118.94px;top:238.9px;color:#111;">-0.65</span><span class="t" style="left:149.49px;top:238.9px;color:#111;">322.28</span><div class="b" style="left:0px;top:268.1px;width:306px;height:1px;background:#d7d3e4;"></div><span class="t" style="left:1.42px;top:254.7px;color:#111;">19.06</span><span class="t" style="left:42.24px;top:254.7px;color:#111;">-8.46</span><span class="t" style="left:83.76px;top:254.7px;color:#111;">0.04</span><span class="t" style="left:118.94px;top:254.7px;color:#111;">-0.64</span><span class="t" style="left:149.49px;top:254.7px;color:#111;">314.82</span><div class="b" style="left:0px;top:283.9px;width:306px;height:1px;background:#d7d3e4;"></div><span class="t" style="left:1.42px;top:270.5px;color:#111;">19.24</span><span class="t" style="left:42.24px;top:270.5px;color:#111;">-8.19</span><span class="t" style="left:83.76px;top:270.5px;color:#111;">0.04</span><span class="t" style="left:118.94px;top:270.5px;color:#111;">-0.63</span><span class="t" style="left:149.49px;top:270.5px;color:#111;">307.16</span><div class="b" style="left:0px;top:299.7px;width:306px;height:1px;background:#d7d3e4;"></div><span class="t" style="left:1.42px;top:286.3px;color:#111;">19.42</span><span class="t" style="left:42.24px;top:286.3px;color:#111;">-7.94</span><span class="t" style="left:83.76px;top:286.3px;color:#111;">0.04</span><span class="t" style="left:118.94px;top:286.3px;color:#111;">-0.63</span><span class="t" style="left:149.49px;top:286.3px;color:#111;">300.08</span><div class="b" style="left:28.5px;top:0px;width:1px;height:295.9px;background:#d7d3e4;"></div><div class="b" style="left:67px;top:0px;width:1px;height:295.9px;background:#d7d3e4;"></div><div class="b" style="left:105.2px;top:0px;width:1px;height:295.9px;background:#d7d3e4;"></div><div class="b" style="left:143.7px;top:0px;width:1px;height:295.9px;background:#d7d3e4;"></div><div class="b" style="left:182.2px;top:0px;width:1px;height:295.9px;background:#d7d3e4;"></div><div class="b" style="left:220.8px;top:0px;width:1px;height:295.9px;background:#d7d3e4;"></div><div class="b" style="left:259.3px;top:0px;width:1px;height:295.9px;background:#d7d3e4;"></div></div>
<div class="b" style="left:307.5px;top:296.1px;width:337.8px;height:295.9px;background:#c8e6ed;"><div class="b" style="left:0px;top:15.3px;width:340px;height:1px;background:#d7d3e4;"></div><span class="t" style="left:8.92px;top:1.9px;color:#e8202a;">26.25</span><span class="t" style="left:46.12px;top:1.9px;color:#111;">16.75</span><span class="t" style="left:79.81px;top:1.9px;color:#111;">-14.62</span><span class="t" style="left:125.76px;top:1.9px;color:#111;">0.07</span><span class="t" style="left:159.74px;top:1.9px;color:#111;">-0.80</span><span class="t" style="left:188.79px;top:1.9px;color:#111;">465.24</span><div class="b" style="left:0px;top:31.1px;width:340px;height:1px;background:#d7d3e4;"></div><span class="t" style="left:8.92px;top:17.7px;color:#2f9a36;">25.40</span><span class="t" style="left:46.12px;top:17.7px;color:#111;">16.91</span><span class="t" style="left:79.81px;top:17.7px;color:#111;">-14.13</span><span class="t" style="left:125.76px;top:17.7px;color:#111;">0.07</span><span class="t" style="left:159.74px;top:17.7px;color:#111;">-0.80</span><span class="t" style="left:188.79px;top:17.7px;color:#111;">454.58</span><div class="b" style="left:0px;top:46.9px;width:340px;height:1px;background:#d7d3e4;"></div><span class="t" style="left:8.92px;top:33.5px;color:#2f9a36;">24.60</span><span class="t" style="left:46.12px;top:33.5px;color:#111;">17.07</span><span class="t" style="left:79.81px;top:33.5px;color:#111;">-13.66</span><span class="t" style="left:125.76px;top:33.5px;color:#111;">0.06</span><span class="t" style="left:159.74px;top:33.5px;color:#111;">-0.79</span><span class="t" style="left:188.79px;top:33.5px;color:#111;">444.31</span><div class="b" style="left:0px;top:62.7px;width:340px;height:1px;background:#d7d3e4;"></div><span class="t" style="left:8.92px;top:49.3px;color:#2f9a36;">23.80</span><span class="t" style="left:46.12px;top:49.3px;color:#111;">17.22</span><span class="t" style="left:79.81px;top:49.3px;color:#111;">-13.20</span><span class="t" style="left:125.76px;top:49.3px;color:#111;">0.06</span><span class="t" style="left:159.74px;top:49.3px;color:#111;">-0.78</span><span class="t" style="left:188.79px;top:49.3px;color:#111;">434.03</span><div class="b" style="left:0px;top:78.5px;width:340px;height:1px;background:#d7d3e4;"></div><span class="t" style="left:8.92px;top:65.1px;color:#2f9a36;">23.05</span><span class="t" style="left:46.12px;top:65.1px;color:#111;">17.37</span><span class="t" style="left:79.81px;top:65.1px;color:#111;">-12.77</span><span class="t" style="left:125.76px;top:65.1px;color:#111;">0.06</span><span class="t" style="left:159.74px;top:65.1px;color:#111;">-0.77</span><span class="t" style="left:188.79px;top:65.1px;color:#111;">424.07</span><div class="b" style="left:0px;top:94.3px;width:340px;height:1px;background:#d7d3e4;"></div><span class="t" style="left:8.92px;top:80.9px;color:#2f9a36;">22.30</span><span class="t" style="left:46.12px;top:80.9px;color:#111;">17.52</span><span class="t" style="left:79.81px;top:80.9px;color:#111;">-12.34</span><span class="t" style="left:125.76px;top:80.9px;color:#111;">0.06</span><span class="t" style="left:159.74px;top:80.9px;color:#111;">-0.76</span><span class="t" style="left:188.79px;top:80.9px;color:#111;">414.12</span><div class="b" style="left:0px;top:110.1px;width:340px;height:1px;background:#d7d3e4;"></div><span class="t" style="left:8.92px;top:96.7px;color:#2f9a36;">21.60</span><span class="t" style="left:46.12px;top:96.7px;color:#111;">17.68</span><span class="t" style="left:80.58px;top:96.7px;color:#111;">-11.94</span><span class="t" style="left:125.76px;top:96.7px;color:#111;">0.06</span><span class="t" style="left:159.74px;top:96.7px;color:#111;">-0.75</span><span class="t" style="left:188.79px;top:96.7px;color:#111;">404.51</span><div class="b" style="left:0px;top:125.9px;width:340px;height:1px;background:#d7d3e4;"></div><span class="t" style="left:8.92px;top:112.5px;color:#2f9a36;">20.95</span><span class="t" style="left:46.12px;top:112.5px;color:#111;">17.84</span><span class="t" style="left:80.58px;top:112.5px;color:#111;">-11.55</span><span class="t" style="left:125.76px;top:112.5px;color:#111;">0.05</span><span class="t" style="left:159.74px;top:112.5px;color:#111;">-0.74</span><span class="t" style="left:188.79px;top:112.5px;color:#111;">395.28</span><div class="b" style="left:0px;top:141.7px;width:340px;height:1px;background:#d7d3e4;"></div><span class="t" style="left:8.92px;top:128.3px;color:#e8202a;">20.25</span><span class="t" style="left:46.12px;top:128.3px;color:#111;">17.97</span><span class="t" style="left:80.58px;top:128.3px;color:#111;">-11.16</span><span class="t" style="left:125.76px;top:128.3px;color:#111;">0.05</span><span class="t" style="left:159.74px;top:128.3px;color:#111;">-0.73</span><span class="t" style="left:188.79px;top:128.3px;color:#111;">385.75</span><div class="b" style="left:0px;top:157.5px;width:340px;height:1px;background:#d7d3e4;"></div><span class="t" style="left:8.92px;top:144.1px;color:#2f9a36;">19.65</span><span class="t" style="left:46.12px;top:144.1px;color:#111;">18.14</span><span class="t" style="left:79.81px;top:144.1px;color:#111;">-10.81</span><span class="t" style="left:125.76px;top:144.1px;color:#111;">0.05</span><span class="t" style="left:159.74px;top:144.1px;color:#111;">-0.72</span><span class="t" style="left:188.79px;top:144.1px;color:#111;">376.87</span><div class="b" style="left:0px;top:173.3px;width:340px;height:1px;background:#d7d3e4;"></div><span class="t" style="left:8.92px;top:159.9px;color:#2f9a36;">19.05</span><span class="t" style="left:46.12px;top:159.9px;color:#111;">18.29</span><span class="t" style="left:79.81px;top:159.9px;color:#111;">-10.46</span><span class="t" style="left:125.76px;top:159.9px;color:#111;">0.05</span><span class="t" style="left:159.74px;top:159.9px;color:#111;">-0.71</span><span class="t" style="left:188.79px;top:159.9px;color:#111;">368.06</span><div class="b" style="left:0px;top:189.1px;width:340px;height:1px;background:#d7d3e4;"></div><span class="t" style="left:8.92px;top:175.7px;color:#2f9a36;">18.50</span><span class="t" style="left:46.12px;top:175.7px;color:#111;">18.45</span><span class="t" style="left:79.81px;top:175.7px;color:#111;">-10.13</span><span class="t" style="left:125.76px;top:175.7px;color:#111;">0.05</span><span class="t" style="left:159.74px;top:175.7px;color:#111;">-0.71</span><span class="t" style="left:188.79px;top:175.7px;color:#111;">359.68</span><div class="b" style="left:0px;top:204.9px;width:340px;height:1px;background:#d7d3e4;"></div><span class="t" style="left:8.92px;top:191.5px;color:#2f9a36;">17.95</span><span class="t" style="left:46.12px;top:191.5px;color:#111;">18.61</span><span class="t" style="left:85.44px;top:191.5px;color:#111;">-9.81</span><span class="t" style="left:125.76px;top:191.5px;color:#111;">0.05</span><span class="t" style="left:159.74px;top:191.5px;color:#111;">-0.70</span><span class="t" style="left:188.79px;top:191.5px;color:#111;">351.33</span><div class="b" style="left:0px;top:220.7px;width:340px;height:1px;background:#d7d3e4;"></div><span class="t" style="left:8.92px;top:207.3px;color:#e8202a;">17.40</span><span class="t" style="left:46.12px;top:207.3px;color:#111;">18.75</span><span class="t" style="left:85.44px;top:207.3px;color:#111;">-9.50</span><span class="t" style="left:125.76px;top:207.3px;color:#111;">0.04</span><span class="t" style="left:159.74px;top:207.3px;color:#111;">-0.69</span><span class="t" style="left:188.79px;top:207.3px;color:#111;">343.15</span><div class="b" style="left:0px;top:236.5px;width:340px;height:1px;background:#d7d3e4;"></div><span class="t" style="left:8.92px;top:223.1px;color:#e8202a;">16.85</span><span class="t" style="left:46.12px;top:223.1px;color:#111;">18.90</span><span class="t" style="left:85.44px;top:223.1px;color:#111;">-9.19</span><span class="t" style="left:125.76px;top:223.1px;color:#111;">0.04</span><span class="t" style="left:159.74px;top:223.1px;color:#111;">-0.68</span><span class="t" style="left:188.79px;top:223.1px;color:#111;">334.73</span><div class="b" style="left:0px;top:252.3px;width:340px;height:1px;background:#d7d3e4;"></div><span class="t" style="left:8.92px;top:238.9px;color:#e8202a;">16.35</span><span class="t" style="left:46.12px;top:238.9px;color:#111;">19.05</span><span class="t" style="left:85.44px;top:238.9px;color:#111;">-8.90</span><span class="t" style="left:125.76px;top:238.9px;color:#111;">0.04</span><span class="t" style="left:159.74px;top:238.9px;color:#111;">-0.67</span><span class="t" style="left:188.79px;top:238.9px;color:#111;">326.95</span><div class="b" style="left:0px;top:268.1px;width:340px;height:1px;background:#d7d3e4;"></div><span class="t" style="left:8.92px;top:254.7px;color:#111;">15.85</span><span class="t" style="left:46.12px;top:254.7px;color:#111;">19.24</span><span class="t" style="left:85.44px;top:254.7px;color:#111;">-8.60</span><span class="t" style="left:125.76px;top:254.7px;color:#111;">0.04</span><span class="t" style="left:159.74px;top:254.7px;color:#111;">-0.66</span><span class="t" style="left:188.79px;top:254.7px;color:#111;">318.64</span><div class="b" style="left:0px;top:283.9px;width:340px;height:1px;background:#d7d3e4;"></div><span class="t" style="left:8.92px;top:270.5px;color:#111;">15.40</span><span class="t" style="left:46.12px;top:270.5px;color:#111;">19.40</span><span class="t" style="left:85.44px;top:270.5px;color:#111;">-8.33</span><span class="t" style="left:125.76px;top:270.5px;color:#111;">0.04</span><span class="t" style="left:159.74px;top:270.5px;color:#111;">-0.65</span><span class="t" style="left:189.56px;top:270.5px;color:#111;">311.30</span><div class="b" style="left:0px;top:299.7px;width:340px;height:1px;background:#d7d3e4;"></div><span class="t" style="left:8.92px;top:286.3px;color:#111;">14.95</span><span class="t" style="left:46.12px;top:286.3px;color:#111;">19.55</span><span class="t" style="left:85.44px;top:286.3px;color:#111;">-8.07</span><span class="t" style="left:125.76px;top:286.3px;color:#111;">0.04</span><span class="t" style="left:159.74px;top:286.3px;color:#111;">-0.64</span><span class="t" style="left:188.79px;top:286.3px;color:#111;">303.97</span><div class="b" style="left:36px;top:0px;width:1px;height:295.9px;background:#d7d3e4;"></div><div class="b" style="left:73.2px;top:0px;width:1px;height:295.9px;background:#d7d3e4;"></div><div class="b" style="left:110.2px;top:0px;width:1px;height:295.9px;background:#d7d3e4;"></div><div class="b" style="left:147.2px;top:0px;width:1px;height:295.9px;background:#d7d3e4;"></div><div class="b" style="left:184.5px;top:0px;width:1px;height:295.9px;background:#d7d3e4;"></div><div class="b" style="left:221.5px;top:0px;width:1px;height:295.9px;background:#d7d3e4;"></div><div class="b" style="left:258.5px;top:0px;width:1px;height:295.9px;background:#d7d3e4;"></div><div class="b" style="left:296px;top:0px;width:1px;height:295.9px;background:#d7d3e4;"></div></div>
<div class="b" style="left:645.3px;top:296.1px;width:13.7px;height:295.9px;background:#d1d6e7;"></div>
<svg class="b" style="left:649.3px;top:300.6px" width="5.5" height="3" viewBox="0 0 5.5 3"><path d="M0 3H5.5L2.75 0z" fill="#5a6070"/></svg>
<svg class="b" style="left:649.3px;top:584.5px" width="5.5" height="3" viewBox="0 0 5.5 3"><path d="M0 0H5.5L2.75 3z" fill="#5a6070"/></svg>
<div class="b" style="left:647.8px;top:421.3px;width:8.9px;height:14.2px;background:#9ba5b8;"></div>
<div class="b" style="left:663px;top:401px;width:4px;height:12.5px;opacity:.55;background-image:linear-gradient(45deg,#8e97ae 25%,transparent 25%,transparent 75%,#8e97ae 75%),linear-gradient(45deg,#8e97ae 25%,transparent 25%,transparent 75%,#8e97ae 75%);background-size:2px 2px;background-position:0 0,1px 1px;"></div>
<div class="b" style="left:269.5px;top:596.7px;width:12.5px;height:4px;opacity:.55;background-image:linear-gradient(45deg,#8e97ae 25%,transparent 25%,transparent 75%,#8e97ae 75%),linear-gradient(45deg,#8e97ae 25%,transparent 25%,transparent 75%,#8e97ae 75%);background-size:2px 2px;background-position:0 0,1px 1px;"></div>
<div class="b" style="left:-2px;top:605.5px;width:100.2px;height:16.3px;background:#fff;border:1px solid #bcc2d3;box-sizing:border-box;"></div>
<span class="t" style="left:-0.3px;top:607.8px;letter-spacing:-0.54px;">ined</span>
<svg class="b" style="left:88.7px;top:612.3px" width="5.5" height="3" viewBox="0 0 5.5 3"><path d="M0 0H5.5L2.75 3z" fill="#555"/></svg>
<div class="b" style="left:106.4px;top:605.5px;width:67.7px;height:16.3px;background:#fff;border:1px solid #bcc2d3;box-sizing:border-box;"></div>
<span class="t" style="left:109.7px;top:607.8px;letter-spacing:-0.22px;">Auto</span>
<svg class="b" style="left:164.5px;top:612.3px" width="5.5" height="3" viewBox="0 0 5.5 3"><path d="M0 0H5.5L2.75 3z" fill="#555"/></svg>
<div class="b" style="left:541.6px;top:609.5px;width:8px;height:8px;background:#fff;border:1px solid #aeb4c6;box-sizing:border-box;"></div>
<span class="t" style="left:553.5px;top:607.2px;letter-spacing:0.1px;">Ignore Today's Trades</span>
<div class="b" style="left:-2px;top:624.8px;width:662px;height:52px;background:#fff;border:1px solid #bcc2d3;box-sizing:border-box;"></div>
<div class="b" style="left:-1px;top:625.8px;width:660px;height:17.1px;background:#f5f6fb;"></div>
<div class="b" style="left:-1px;top:642.4px;width:660px;height:1px;background:#d0d4e2;"></div>
<div class="b" style="left:-1px;top:658.1px;width:660px;height:1px;background:#d6dae6;"></div>
<div class="b" style="left:9.5px;top:625.8px;width:1px;height:60px;background:#d6dae6;"></div>
<div class="b" style="left:68.1px;top:625.8px;width:1px;height:60px;background:#d6dae6;"></div>
<div class="b" style="left:126.5px;top:625.8px;width:1px;height:60px;background:#d6dae6;"></div>
<div class="b" style="left:185.2px;top:625.8px;width:1px;height:60px;background:#d6dae6;"></div>
<div class="b" style="left:243.5px;top:625.8px;width:1px;height:60px;background:#d6dae6;"></div>
<div class="b" style="left:302.5px;top:625.8px;width:1px;height:60px;background:#d6dae6;"></div>
<div class="b" style="left:360.5px;top:625.8px;width:1px;height:60px;background:#d6dae6;"></div>
<div class="b" style="left:418.5px;top:625.8px;width:1px;height:60px;background:#d6dae6;"></div>
<div class="b" style="left:477px;top:625.8px;width:1px;height:60px;background:#d6dae6;"></div>
<div class="b" style="left:535.5px;top:625.8px;width:1px;height:60px;background:#d6dae6;"></div>
<div class="b" style="left:594px;top:625.8px;width:1px;height:60px;background:#d6dae6;"></div>
<span class="t" style="left:28.91px;top:627.2px;color:#2a2a2a;">Cost</span>
<span class="t" style="left:76.23px;top:627.2px;color:#2a2a2a;">Curr Cost</span>
<span class="t" style="left:130.02px;top:627.2px;color:#2a2a2a;">Commissi...</span>
<span class="t" style="left:205.82px;top:627.2px;color:#2a2a2a;">PnL</span>
<span class="t" style="left:259.92px;top:627.2px;color:#2a2a2a;">PnL%</span>
<span class="t" style="left:320.24px;top:627.2px;color:#2a2a2a;">Delta</span>
<span class="t" style="left:371.88px;top:627.2px;color:#2a2a2a;">Gamma</span>
<span class="t" style="left:435.33px;top:627.2px;color:#2a2a2a;">Theta</span>
<span class="t" style="left:495.19px;top:627.2px;color:#2a2a2a;">Vega</span>
<span class="t" style="left:557.1px;top:627.2px;color:#2a2a2a;">T/D</span>
<span class="t" style="left:618.59px;top:627.2px;color:#2a2a2a;">Plot</span>
<span class="t" style="left:-3.87px;top:644.55px;">20</span>
<span class="t" style="left:35.09px;top:644.55px;">595.80</span>
<span class="t" style="left:90.18px;top:644.55px;">-600.00</span>
<span class="t" style="left:163.46px;top:644.55px;">4.20</span>
<span class="t" style="left:218.44px;top:644.55px;color:#e8202a;">-4.20</span>
<span class="t" style="left:268.35px;top:644.55px;color:#e8202a;">-0.05%</span>
<span class="t" style="left:338.76px;top:644.55px;">3.51</span>
<span class="t" style="left:393.44px;top:644.55px;">-0.02</span>
<span class="t" style="left:455.26px;top:644.55px;">8.44</span>
<span class="t" style="left:504.81px;top:644.55px;">-85.17</span>
<span class="t" style="left:577.89px;top:644.55px;">2.4</span>
<span class="t" style="left:338.76px;top:660.2px;">0.00</span>
<span class="t" style="left:396.76px;top:660.2px;">0.00</span>
<span class="t" style="left:455.26px;top:660.2px;">0.00</span>
<span class="t" style="left:513.76px;top:660.2px;">0.00</span>
<span class="t" style="left:586.27px;top:660.2px;">0</span>
<svg class="b" style="left:623.5px;top:646.8px" width="8" height="8" viewBox="0 0 8 8"><rect x="0.5" y="0.5" width="7" height="7" fill="#fff" stroke="#9aa0b0" stroke-width="0.8"/><path d="M1.8 4l1.5 1.7 3-3.6" fill="none" stroke="#555" stroke-width="0.9"/></svg>
<svg class="b" style="left:623.5px;top:662.5px" width="8" height="8" viewBox="0 0 8 8"><rect x="0.5" y="0.5" width="7" height="7" fill="#fff" stroke="#9aa0b0" stroke-width="0.8"/><path d="M1.8 4l1.5 1.7 3-3.6" fill="none" stroke="#555" stroke-width="0.9"/></svg>
<div class="b" style="left:670px;top:138px;width:410px;height:515px;background:#dde1ef;"></div>
<div class="b" style="left:670px;top:138px;width:1px;height:537px;background:#b4bacd;"></div>
<div class="b" style="left:670.5px;top:138.8px;width:64.5px;height:22.7px;background:#dde1ef;border:1px solid #a6aec2;border-bottom:none;box-sizing:border-box;"></div>
<span class="t" style="left:680.5px;top:143.3px;letter-spacing:-0.4px;">Risk Chart</span>
<div class="b" style="left:735px;top:138.8px;width:68.3px;height:22.4px;background:#d7dbeb;border:1px solid #a6aec2;box-sizing:border-box;"></div>
<span class="t" style="left:744.5px;top:143.3px;letter-spacing:-0.41px;">Price Chart</span>
<div class="b" style="left:802.3px;top:138.8px;width:107px;height:22.4px;background:#d7dbeb;border:1px solid #a6aec2;box-sizing:border-box;"></div>
<span class="t" style="left:812px;top:143.3px;letter-spacing:-0.21px;">Movement Analysis</span>
<div class="b" style="left:908.3px;top:138.8px;width:54.7px;height:22.4px;background:#d7dbeb;border:1px solid #a6aec2;box-sizing:border-box;"></div>
<span class="t" style="left:918px;top:143.3px;letter-spacing:-0.37px;">Volatility</span>
<div class="b" style="left:962px;top:138.8px;width:139px;height:22.4px;background:#d7dbeb;border:1px solid #a6aec2;box-sizing:border-box;"></div>
<span class="t" style="left:972.5px;top:143.3px;letter-spacing:-0.21px;">Statistics &amp; Fundamenta</span>
<span class="t" style="left:676px;top:165.6px;letter-spacing:-0.17px;">Vol Adjust</span>
<div class="b" style="left:724.5px;top:163.5px;width:44.5px;height:16px;background:#fff;border:1px solid #bcc2d3;box-sizing:border-box;"></div>
<span class="t" style="left:747.67px;top:166px;">0</span>
<svg class="b" style="left:760px;top:166.3px" width="6" height="11" viewBox="0 0 6 11"><path d="M0.5 3.5L3 0.8 5.5 3.5zM0.5 7.5L3 10.2 5.5 7.5z" fill="#444"/></svg>
<span class="t" style="left:986px;top:165.6px;letter-spacing:-0.32px;">Projection</span>
<div class="b" style="left:1033px;top:163.8px;width:60px;height:16.5px;background:#fff;border:1px solid #bcc2d3;box-sizing:border-box;"></div>
<span class="t" style="left:1035.5px;top:166px;letter-spacing:0.07px;">08/11/2024</span>
<div class="b" style="left:671px;top:182.5px;width:409px;height:470.5px;background:#fff;"></div>
<svg class="b" style="left:671px;top:182px" width="409" height="493" viewBox="671 182 409 493"><rect x="920.1" y="198.2" width="93.4" height="275.2" fill="#92cddc"/><rect x="943.2" y="198.2" width="46.7" height="275.2" fill="#4f81bd"/><path d="M716 198.2H1080M716 211.98H1080M716 239.56H1080M716 253.34H1080M716 267.12H1080M716 280.91H1080M716 294.69H1080M716 308.48H1080M716 322.26H1080M716 336.05H1080M716 349.83H1080M716 363.62H1080M716 377.4H1080M716 391.19H1080M716 404.98H1080M716 418.76H1080M716 432.54H1080M716 446.33H1080M716 460.12H1080M716 473.9H1080M736.1 198.2V475.9M797.95 198.2V475.9M859.8 198.2V475.9M921.65 198.2V475.9M983.5 198.2V475.9M1045.35 198.2V475.9" stroke="#e0e0e0" stroke-opacity="0.9" stroke-width="1" fill="none"/><path d="M718.5 198.2V475.9" stroke="#d8d8d8" stroke-width="1" fill="none"/><path d="M718.4 225.5H1080" stroke="#222" stroke-width="1" fill="none"/><path d="M718.5 326C723.1 322.87 740.32 311.12 746.1 307.2C751.88 303.28 747.27 306.28 753.2 302.5C759.13 298.72 773.25 289.63 781.7 284.5C790.15 279.37 795.85 276.02 803.9 271.7C811.95 267.38 821.15 262.8 830 258.6C838.85 254.4 850.33 249.33 857 246.5C863.67 243.67 863.67 243.75 870 241.6C876.33 239.45 886.5 236.1 895 233.6C903.5 231.1 912.17 228.67 921 226.6C929.83 224.53 939.1 222.8 948 221.2C956.9 219.6 964.9 218.22 974.4 217C983.9 215.78 993.9 214.8 1005 213.9C1016.1 213 1028.5 212.28 1041 211.6C1053.5 210.92 1073.5 210.1 1080 209.8" stroke="#f25252" stroke-width="1.25" fill="none"/><path d="M718.5 309.8C723.28 307.52 741.42 298.87 747.2 296.1C752.98 293.33 748.07 295.45 753.2 293.2C758.33 290.95 769.55 286.18 778 282.6C786.45 279.02 794.07 275.53 803.9 271.7C813.73 267.87 825.9 263.38 837 259.6C848.1 255.82 864.92 250.77 870.5 249" stroke="#f25252" stroke-width="1.25" fill="none"/><path d="M870.5 249C874.58 247.77 886.5 244 895 241.6C903.5 239.2 912.67 236.65 921.5 234.6C930.33 232.55 939.18 230.83 948 229.3C956.82 227.77 964.9 226.75 974.4 225.4C983.9 224.05 993.9 222.57 1005 221.2C1016.1 219.83 1028.5 218.4 1041 217.2C1053.5 216 1073.5 214.53 1080 214" stroke="#8db0f4" stroke-width="1.25" fill="none"/><path d="M718.5 457.1H734.9L753.8 209H1080" stroke="#4c4cc6" stroke-width="1.8" fill="none" stroke-linejoin="round"/><path d="M753.2 197.7V474.9" stroke="#b04cb4" stroke-width="1.2" stroke-dasharray="3.3 3.37" fill="none"/><text transform="translate(752 470.5) rotate(-90)" font-size="9.6" fill="#d4a4dc" textLength="31" lengthAdjust="spacingAndGlyphs">5627.90</text><text transform="translate(930.23 233.5) rotate(-90)" font-size="10.4" fill="#62a8c6" textLength="32" lengthAdjust="spacingAndGlyphs">5898.02</text><text transform="translate(954.44 233.5) rotate(-90)" font-size="10.4" fill="#8eb2e2" textLength="32" lengthAdjust="spacingAndGlyphs">5935.56</text><text transform="translate(988.4 233.5) rotate(-90)" font-size="10.4" fill="#8eb8e4" textLength="32" lengthAdjust="spacingAndGlyphs">6010.84</text><text transform="translate(1012.63 233.5) rotate(-90)" font-size="10.4" fill="#62a8c6" textLength="32" lengthAdjust="spacingAndGlyphs">6048.39</text><rect x="969.2" y="222.8" width="3.2" height="6.6" fill="#c49a9c"/><circle cx="974.5" cy="225.7" r="2.8" fill="#f01010" stroke="#7a0c0c" stroke-width="0.8"/><rect x="674.5" y="492.6" width="420" height="157.4" rx="3" fill="#e8f0f8" stroke="#8392a8" stroke-width="1"/><rect x="718.9" y="515.7" width="48.8" height="9.1" fill="#f07878" stroke="#5a5a66" stroke-width="0.7"/><rect x="767.7" y="515.7" width="61.7" height="5.8" fill="#f07878" stroke="#5a5a66" stroke-width="0.7"/><rect x="829.4" y="515.7" width="61.9" height="2.8" fill="#f07878" stroke="#5a5a66" stroke-width="0.7"/><rect x="891.3" y="515.7" width="62" height="1.5" fill="#f07878" stroke="#5a5a66" stroke-width="0.7"/><path d="M953.3 515.7H1014.9" stroke="#666" stroke-width="0.8"/><rect x="1014.9" y="514.6" width="61.7" height="1.1" fill="#5878ee" stroke="#5a5a66" stroke-width="0.7"/><rect x="1076.6" y="513.5" width="63.4" height="2.2" fill="#5878ee" stroke="#5a5a66" stroke-width="0.7"/><rect x="718.9" y="543.4" width="48.8" height="9.1" fill="#5878ee" stroke="#5a5a66" stroke-width="0.7"/><rect x="767.7" y="544.7" width="61.7" height="7.8" fill="#5878ee" stroke="#5a5a66" stroke-width="0.7"/><rect x="829.4" y="546.7" width="61.9" height="5.8" fill="#5878ee" stroke="#5a5a66" stroke-width="0.7"/><rect x="891.3" y="548.5" width="62" height="4" fill="#5878ee" stroke="#5a5a66" stroke-width="0.7"/><rect x="953.3" y="549.6" width="61.6" height="2.9" fill="#5878ee" stroke="#5a5a66" stroke-width="0.7"/><rect x="1014.9" y="550.8" width="61.7" height="1.7" fill="#5878ee" stroke="#5a5a66" stroke-width="0.7"/><rect x="1076.6" y="551.6" width="63.4" height="0.9" fill="#5878ee" stroke="#5a5a66" stroke-width="0.7"/><rect x="718.9" y="580" width="48.8" height="3.7" fill="#f07878" stroke="#5a5a66" stroke-width="0.7"/><rect x="767.7" y="580" width="61.7" height="8.5" fill="#f07878" stroke="#5a5a66" stroke-width="0.7"/><rect x="829.4" y="580" width="61.9" height="8.5" fill="#f07878" stroke="#5a5a66" stroke-width="0.7"/><rect x="891.3" y="580" width="62" height="8.5" fill="#f07878" stroke="#5a5a66" stroke-width="0.7"/><rect x="953.3" y="580" width="61.6" height="8.5" fill="#f07878" stroke="#5a5a66" stroke-width="0.7"/><rect x="1014.9" y="580" width="61.7" height="3.7" fill="#f07878" stroke="#5a5a66" stroke-width="0.7"/><rect x="1076.6" y="580" width="63.4" height="3" fill="#f07878" stroke="#5a5a66" stroke-width="0.7"/><rect x="718.9" y="607.7" width="48.8" height="8.5" fill="#f07878" stroke="#5a5a66" stroke-width="0.7"/><rect x="767.7" y="607.7" width="61.7" height="2.3" fill="#f07878" stroke="#5a5a66" stroke-width="0.7"/><rect x="829.4" y="606.2" width="61.9" height="1.5" fill="#5878ee" stroke="#5a5a66" stroke-width="0.7"/><rect x="891.3" y="603.1" width="62" height="4.6" fill="#5878ee" stroke="#5a5a66" stroke-width="0.7"/><rect x="953.3" y="602.8" width="61.6" height="4.9" fill="#5878ee" stroke="#5a5a66" stroke-width="0.7"/><rect x="1014.9" y="603.7" width="61.7" height="4" fill="#5878ee" stroke="#5a5a66" stroke-width="0.7"/><rect x="1076.6" y="604.5" width="63.4" height="3.2" fill="#5878ee" stroke="#5a5a66" stroke-width="0.7"/><rect x="718.9" y="634.9" width="48.8" height="1.2" fill="#f07878" stroke="#5a5a66" stroke-width="0.7"/><rect x="767.7" y="634.9" width="61.7" height="5.8" fill="#f07878" stroke="#5a5a66" stroke-width="0.7"/><rect x="829.4" y="634.9" width="61.9" height="8.3" fill="#f07878" stroke="#5a5a66" stroke-width="0.7"/><rect x="891.3" y="634.9" width="62" height="8.6" fill="#f07878" stroke="#5a5a66" stroke-width="0.7"/><rect x="953.3" y="634.9" width="61.6" height="8" fill="#f07878" stroke="#5a5a66" stroke-width="0.7"/><rect x="1014.9" y="634.9" width="61.7" height="5.6" fill="#f07878" stroke="#5a5a66" stroke-width="0.7"/><rect x="1076.6" y="634.9" width="63.4" height="4.2" fill="#f07878" stroke="#5a5a66" stroke-width="0.7"/><rect x="953.4" y="478.2" width="41.9" height="171.8" rx="3" fill="#e9f0fa" fill-opacity="0.86" stroke="#8c98a8" stroke-width="1"/><rect x="722.9" y="203.3" width="135.7" height="46.4" rx="3" fill="#e6eefa" fill-opacity="0.86" stroke="#93a0b0" stroke-width="1"/><rect x="729.4" y="210.2" width="2.5" height="9.3" fill="#f03030"/><rect x="729.4" y="221.3" width="2.5" height="10" fill="#86a6ee"/><rect x="729.4" y="233.4" width="2.5" height="9.7" fill="#86a6ee"/><rect x="722.4" y="422.7" width="97.6" height="47.1" rx="3" fill="#eaf1fc" fill-opacity="0.86" stroke="#93a0b0" stroke-width="1"/><rect x="1040.7" y="203.2" width="60" height="36.2" rx="3" fill="#eaf0fa" fill-opacity="0.92" stroke="#93a0b0" stroke-width="1"/></svg>
<span class="t" style="left:692.69px;top:192.9px;font-size:10px;letter-spacing:0;transform:scaleX(0.845);transform-origin:100% 50%;color:#222;">12%</span>
<span class="t" style="left:698.25px;top:206.7px;font-size:10px;letter-spacing:0;transform:scaleX(0.845);transform-origin:100% 50%;color:#222;">6%</span>
<div class="b" style="left:676.2px;top:218.9px;width:38.9px;height:11.5px;background:#c90008;"><span class="t" style="right:2.6px;top:-1.3px;font-size:10px;letter-spacing:-0.75px;color:#fff">0%</span></div>
<span class="t" style="left:694.92px;top:234.3px;font-size:10px;letter-spacing:0;transform:scaleX(0.845);transform-origin:100% 50%;color:#222;">-6%</span>
<span class="t" style="left:689.35px;top:248.1px;font-size:10px;letter-spacing:0;transform:scaleX(0.845);transform-origin:100% 50%;color:#222;">-12%</span>
<span class="t" style="left:689.35px;top:261.9px;font-size:10px;letter-spacing:0;transform:scaleX(0.845);transform-origin:100% 50%;color:#222;">-18%</span>
<span class="t" style="left:689.35px;top:275.7px;font-size:10px;letter-spacing:0;transform:scaleX(0.845);transform-origin:100% 50%;color:#222;">-24%</span>
<span class="t" style="left:689.35px;top:289.5px;font-size:10px;letter-spacing:0;transform:scaleX(0.845);transform-origin:100% 50%;color:#222;">-30%</span>
<span class="t" style="left:689.35px;top:303.3px;font-size:10px;letter-spacing:0;transform:scaleX(0.845);transform-origin:100% 50%;color:#222;">-36%</span>
<span class="t" style="left:689.35px;top:317.1px;font-size:10px;letter-spacing:0;transform:scaleX(0.845);transform-origin:100% 50%;color:#222;">-42%</span>
<span class="t" style="left:689.35px;top:330.9px;font-size:10px;letter-spacing:0;transform:scaleX(0.845);transform-origin:100% 50%;color:#222;">-48%</span>
<span class="t" style="left:689.35px;top:344.7px;font-size:10px;letter-spacing:0;transform:scaleX(0.845);transform-origin:100% 50%;color:#222;">-54%</span>
<span class="t" style="left:689.35px;top:358.5px;font-size:10px;letter-spacing:0;transform:scaleX(0.845);transform-origin:100% 50%;color:#222;">-59%</span>
<span class="t" style="left:689.35px;top:372.3px;font-size:10px;letter-spacing:0;transform:scaleX(0.845);transform-origin:100% 50%;color:#222;">-65%</span>
<span class="t" style="left:689.35px;top:386.1px;font-size:10px;letter-spacing:0;transform:scaleX(0.845);transform-origin:100% 50%;color:#222;">-71%</span>
<span class="t" style="left:689.35px;top:399.9px;font-size:10px;letter-spacing:0;transform:scaleX(0.845);transform-origin:100% 50%;color:#222;">-77%</span>
<span class="t" style="left:689.35px;top:413.7px;font-size:10px;letter-spacing:0;transform:scaleX(0.845);transform-origin:100% 50%;color:#222;">-83%</span>
<span class="t" style="left:689.35px;top:427.5px;font-size:10px;letter-spacing:0;transform:scaleX(0.845);transform-origin:100% 50%;color:#222;">-89%</span>
<span class="t" style="left:689.35px;top:441.3px;font-size:10px;letter-spacing:0;transform:scaleX(0.845);transform-origin:100% 50%;color:#222;">-95%</span>
<span class="t" style="left:683.79px;top:455.1px;font-size:10px;letter-spacing:0;transform:scaleX(0.845);transform-origin:100% 50%;color:#222;">-101%</span>
<span class="t" style="left:683.79px;top:468.9px;font-size:10px;letter-spacing:0;transform:scaleX(0.845);transform-origin:100% 50%;color:#222;">-107%</span>
<span class="t" style="left:722.35px;top:184.5px;font-size:10.3px;letter-spacing:0;transform:scaleX(0.885);transform-origin:50% 50%;color:#222;">-6.2%</span>
<span class="t" style="left:784.2px;top:184.5px;font-size:10.3px;letter-spacing:0;transform:scaleX(0.885);transform-origin:50% 50%;color:#222;">-4.6%</span>
<span class="t" style="left:846.05px;top:184.5px;font-size:10.3px;letter-spacing:0;transform:scaleX(0.885);transform-origin:50% 50%;color:#222;">-2.9%</span>
<span class="t" style="left:907.9px;top:184.5px;font-size:10.3px;letter-spacing:0;transform:scaleX(0.885);transform-origin:50% 50%;color:#222;">-1.2%</span>
<span class="t" style="left:1033.31px;top:184.5px;font-size:10.3px;letter-spacing:0;transform:scaleX(0.885);transform-origin:50% 50%;color:#222;">2.1%</span>
<div class="b" style="left:962.2px;top:183px;width:24.6px;height:10.8px;background:#e9f0fa;border:1px solid #7c8aa0;box-sizing:border-box;"></div>
<span class="t" style="left:962.76px;top:182.9px;font-size:10.3px;letter-spacing:0;transform:scaleX(0.877);transform-origin:50% 50%;color:#333;">0.2%</span>
<span class="t" style="left:985.3px;top:184.3px;font-size:10px;letter-spacing:0;transform:scaleX(0.880);transform-origin:0 50%;color:#222;clip-path:inset(0 0 0 2px);">%</span>
<span class="t" style="left:725.18px;top:477.3px;font-size:10px;letter-spacing:0;transform:scaleX(0.854);transform-origin:50% 50%;color:#222;">5600</span>
<span class="t" style="left:787.03px;top:477.3px;font-size:10px;letter-spacing:0;transform:scaleX(0.854);transform-origin:50% 50%;color:#222;">5700</span>
<span class="t" style="left:848.88px;top:477.3px;font-size:10px;letter-spacing:0;transform:scaleX(0.854);transform-origin:50% 50%;color:#222;">5800</span>
<span class="t" style="left:910.73px;top:477.3px;font-size:10px;letter-spacing:0;transform:scaleX(0.854);transform-origin:50% 50%;color:#222;">5900</span>
<span class="t" style="left:1034.43px;top:477.3px;font-size:10px;letter-spacing:0;transform:scaleX(0.854);transform-origin:50% 50%;color:#222;">6100</span>
<span class="t" style="left:956.53px;top:477.3px;font-size:10px;letter-spacing:0;transform:scaleX(0.913);transform-origin:50% 50%;color:#222;">5985.75</span>
<span class="t" style="left:733px;top:209.4px;font-size:10px;letter-spacing:0;transform:scaleX(0.877);transform-origin:0 50%;color:#505050;">-4.20 Realized PnL</span>
<span class="t" style="left:733px;top:220.8px;font-size:10px;letter-spacing:0;transform:scaleX(0.816);transform-origin:0 50%;color:#505050;">+3</span>
<span class="t" style="left:745.5px;top:220.8px;font-size:10px;letter-spacing:0;transform:scaleX(0.904);transform-origin:0 50%;color:#5656ee;">20dic. 5600 Put Δ</span>
<span class="t" style="left:827.4px;top:220.8px;font-size:10px;letter-spacing:0;transform:scaleX(0.853);transform-origin:0 50%;color:#5656ee;">-10.99</span>
<span class="t" style="left:733px;top:232.3px;font-size:10px;letter-spacing:0;transform:scaleX(0.731);transform-origin:0 50%;color:#505050;">-3</span>
<span class="t" style="left:742.7px;top:232.3px;font-size:10px;letter-spacing:0;transform:scaleX(0.904);transform-origin:0 50%;color:#f25c5c;">20dic. 5630 Put Δ</span>
<span class="t" style="left:824.7px;top:232.3px;font-size:10px;letter-spacing:0;transform:scaleX(0.850);transform-origin:0 50%;color:#f25c5c;">-12.16</span>
<span class="t" style="left:729.5px;top:429px;font-size:10px;letter-spacing:0;transform:scaleX(0.872);transform-origin:0 50%;color:#7c7cd8;">20/12/2024 (0)</span>
<span class="t" style="left:729.5px;top:440.6px;font-size:10px;letter-spacing:0;transform:scaleX(0.873);transform-origin:0 50%;color:#f26464;">29/11/2024 (21) T+21</span>
<span class="t" style="left:729.5px;top:452.3px;font-size:10px;letter-spacing:0;transform:scaleX(0.874);transform-origin:0 50%;color:#8cb2f2;">08/11/2024 (42) T+0</span>
<span class="t" style="left:725.9px;top:456.6px;font-size:10px;letter-spacing:0;transform:scaleX(0.882);transform-origin:0 50%;color:#9a1c9a;">2.5%</span>
<span class="t" style="left:936.7px;top:456.6px;font-size:10px;letter-spacing:0;transform:scaleX(0.882);transform-origin:0 50%;color:#9a1c9a;">97.5%</span>
<span class="t" style="left:1049.2px;top:206px;letter-spacing:-0.16px;color:#404040;">Comments</span>
<span class="t" style="left:1049.2px;top:223.1px;letter-spacing:-0.27px;color:#404040;">Trade Options</span>
<span class="t" style="left:688.9px;top:510.1px;font-size:10px;letter-spacing:0;transform:scaleX(0.877);transform-origin:0 50%;color:#555;">PnL</span>
<span class="t" style="left:686.4px;top:546.1px;font-size:10px;letter-spacing:0;transform:scaleX(0.917);transform-origin:0 50%;color:#555;">Delta</span>
<span class="t" style="left:681.3px;top:573.8px;font-size:10px;letter-spacing:0;transform:scaleX(0.886);transform-origin:0 50%;color:#555;">Gamma</span>
<span class="t" style="left:686.4px;top:601.5px;font-size:10px;letter-spacing:0;transform:scaleX(0.837);transform-origin:0 50%;color:#555;">Theta</span>
<span class="t" style="left:687.1px;top:629.2px;font-size:10px;letter-spacing:0;transform:scaleX(0.908);transform-origin:0 50%;color:#555;">Vega</span>
<span class="t" style="left:724.93px;top:495.7px;font-size:10px;letter-spacing:0;transform:scaleX(0.880);transform-origin:50% 50%;color:#ee6a6a;">-33%</span>
<span class="t" style="left:786.78px;top:495.7px;font-size:10px;letter-spacing:0;transform:scaleX(0.880);transform-origin:50% 50%;color:#ee6a6a;">-21%</span>
<span class="t" style="left:848.63px;top:495.7px;font-size:10px;letter-spacing:0;transform:scaleX(0.880);transform-origin:50% 50%;color:#ee6a6a;">-12%</span>
<span class="t" style="left:913.26px;top:495.7px;font-size:10px;letter-spacing:0;transform:scaleX(0.880);transform-origin:50% 50%;color:#ee6a6a;">-4%</span>
<span class="t" style="left:723.81px;top:505.8px;font-size:10px;letter-spacing:0;transform:scaleX(0.880);transform-origin:50% 50%;color:#ee6a6a;">-2767</span>
<span class="t" style="left:785.66px;top:505.8px;font-size:10px;letter-spacing:0;transform:scaleX(0.880);transform-origin:50% 50%;color:#ee6a6a;">-1777</span>
<span class="t" style="left:850.29px;top:505.8px;font-size:10px;letter-spacing:0;transform:scaleX(0.880);transform-origin:50% 50%;color:#ee6a6a;">-970</span>
<span class="t" style="left:912.14px;top:505.8px;font-size:10px;letter-spacing:0;transform:scaleX(0.880);transform-origin:50% 50%;color:#ee6a6a;">-368</span>
<span class="t" style="left:1037.51px;top:514.2px;font-size:10px;letter-spacing:0;transform:scaleX(0.880);transform-origin:50% 50%;color:#6a7cf0;">303</span>
<span class="t" style="left:1038.62px;top:522.8px;font-size:10px;letter-spacing:0;transform:scaleX(0.880);transform-origin:50% 50%;color:#6a7cf0;">4%</span>
<span class="t" style="left:724.09px;top:551.6px;font-size:10px;letter-spacing:0;transform:scaleX(0.880);transform-origin:50% 50%;color:#6a7cf0;">10.61</span>
<span class="t" style="left:788.72px;top:551.6px;font-size:10px;letter-spacing:0;transform:scaleX(0.880);transform-origin:50% 50%;color:#6a7cf0;">9.06</span>
<span class="t" style="left:850.57px;top:551.6px;font-size:10px;letter-spacing:0;transform:scaleX(0.880);transform-origin:50% 50%;color:#6a7cf0;">7.05</span>
<span class="t" style="left:912.42px;top:551.6px;font-size:10px;letter-spacing:0;transform:scaleX(0.880);transform-origin:50% 50%;color:#6a7cf0;">5.02</span>
<span class="t" style="left:1036.12px;top:551.6px;font-size:10px;letter-spacing:0;transform:scaleX(0.880);transform-origin:50% 50%;color:#6a7cf0;">1.97</span>
<span class="t" style="left:725.2px;top:569.8px;font-size:10px;letter-spacing:0;transform:scaleX(0.880);transform-origin:50% 50%;color:#ee6a6a;">-0.01</span>
<span class="t" style="left:787.05px;top:569.8px;font-size:10px;letter-spacing:0;transform:scaleX(0.880);transform-origin:50% 50%;color:#ee6a6a;">-0.02</span>
<span class="t" style="left:848.9px;top:569.8px;font-size:10px;letter-spacing:0;transform:scaleX(0.880);transform-origin:50% 50%;color:#ee6a6a;">-0.02</span>
<span class="t" style="left:910.75px;top:569.8px;font-size:10px;letter-spacing:0;transform:scaleX(0.880);transform-origin:50% 50%;color:#ee6a6a;">-0.02</span>
<span class="t" style="left:1034.45px;top:569.8px;font-size:10px;letter-spacing:0;transform:scaleX(0.880);transform-origin:50% 50%;color:#ee6a6a;">-0.01</span>
<span class="t" style="left:722.42px;top:597px;font-size:10px;letter-spacing:0;transform:scaleX(0.880);transform-origin:50% 50%;color:#ee6a6a;">-17.51</span>
<span class="t" style="left:787.05px;top:597px;font-size:10px;letter-spacing:0;transform:scaleX(0.880);transform-origin:50% 50%;color:#ee6a6a;">-5.28</span>
<span class="t" style="left:850.57px;top:606.3px;font-size:10px;letter-spacing:0;transform:scaleX(0.880);transform-origin:50% 50%;color:#6a7cf0;">3.38</span>
<span class="t" style="left:912.42px;top:606.3px;font-size:10px;letter-spacing:0;transform:scaleX(0.880);transform-origin:50% 50%;color:#6a7cf0;">7.67</span>
<span class="t" style="left:1036.12px;top:606.3px;font-size:10px;letter-spacing:0;transform:scaleX(0.880);transform-origin:50% 50%;color:#6a7cf0;">6.95</span>
<span class="t" style="left:722.42px;top:624.7px;font-size:10px;letter-spacing:0;transform:scaleX(0.880);transform-origin:50% 50%;color:#ee6a6a;">-16.28</span>
<span class="t" style="left:784.27px;top:624.7px;font-size:10px;letter-spacing:0;transform:scaleX(0.880);transform-origin:50% 50%;color:#ee6a6a;">-66.03</span>
<span class="t" style="left:846.12px;top:624.7px;font-size:10px;letter-spacing:0;transform:scaleX(0.880);transform-origin:50% 50%;color:#ee6a6a;">-92.72</span>
<span class="t" style="left:907.97px;top:624.7px;font-size:10px;letter-spacing:0;transform:scaleX(0.880);transform-origin:50% 50%;color:#ee6a6a;">-95.99</span>
<span class="t" style="left:1031.67px;top:624.7px;font-size:10px;letter-spacing:0;transform:scaleX(0.880);transform-origin:50% 50%;color:#ee6a6a;">-61.64</span>
<span class="t" style="left:978.44px;top:514.2px;font-size:10px;letter-spacing:0;transform:scaleX(0.880);transform-origin:50% 50%;color:#d3d9f6;">44</span>
<span class="t" style="left:976.77px;top:522.8px;font-size:10px;letter-spacing:0;transform:scaleX(0.880);transform-origin:50% 50%;color:#d3d9f6;">1%</span>
<span class="t" style="left:974.27px;top:551.6px;font-size:10px;letter-spacing:0;transform:scaleX(0.880);transform-origin:50% 50%;color:#d3d9f6;">3.28</span>
<span class="t" style="left:972.6px;top:569.8px;font-size:10px;letter-spacing:0;transform:scaleX(0.880);transform-origin:50% 50%;color:#f6d6d8;">-0.02</span>
<span class="t" style="left:974.27px;top:606.3px;font-size:10px;letter-spacing:0;transform:scaleX(0.880);transform-origin:50% 50%;color:#d3d9f6;">8.37</span>
<span class="t" style="left:969.82px;top:624.7px;font-size:10px;letter-spacing:0;transform:scaleX(0.880);transform-origin:50% 50%;color:#f6d6d8;">-83.59</span>
<span class="t" style="left:970.25px;top:506.1px;font-size:10px;letter-spacing:0;transform:scaleX(0.880);transform-origin:50% 50%;color:#ee1c1c;">-4</span>
<span class="t" style="left:963.3px;top:519.1px;font-size:10px;letter-spacing:0;transform:scaleX(0.880);transform-origin:50% 50%;color:#ee1c1c;">0.0%</span>
<span class="t" style="left:964.97px;top:546.1px;font-size:10px;letter-spacing:0;transform:scaleX(0.880);transform-origin:50% 50%;color:#2828ee;">3.51</span>
<span class="t" style="left:963.3px;top:573.8px;font-size:10px;letter-spacing:0;transform:scaleX(0.880);transform-origin:50% 50%;color:#ee1c1c;">-0.02</span>
<span class="t" style="left:964.97px;top:601.1px;font-size:10px;letter-spacing:0;transform:scaleX(0.880);transform-origin:50% 50%;color:#2828ee;">8.44</span>
<span class="t" style="left:960.52px;top:629px;font-size:10px;letter-spacing:0;transform:scaleX(0.880);transform-origin:50% 50%;color:#ee1c1c;">-85.17</span>
<div class="b" style="left:671px;top:653px;width:409px;height:22px;background:#26334e;"></div>
<span class="t" style="left:1040.8px;top:657.9px;font-size:11px;letter-spacing:-0.41px;color:#fff;">260%</span>
<div class="b" style="left:1073.5px;top:664px;width:8px;height:1px;background:#fff;"></div>
</body></html>
